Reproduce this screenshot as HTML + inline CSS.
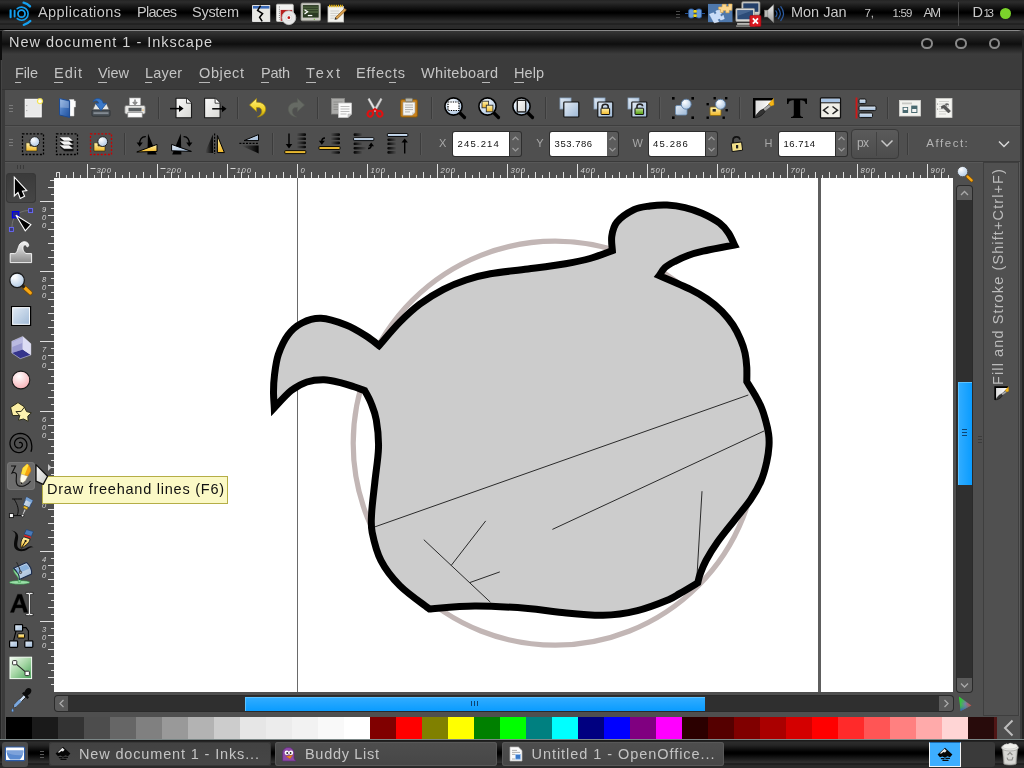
<!DOCTYPE html>
<html><head><meta charset="utf-8"><title>Inkscape</title>
<style>
html,body{margin:0;padding:0;background:#4e4e4e;}
body{width:1024px;height:768px;position:relative;overflow:hidden;font-family:"Liberation Sans",sans-serif;}
#wrap{position:absolute;left:0;top:0;width:1024px;height:768px;will-change:transform;}
.t{position:absolute;white-space:nowrap;font-family:"Liberation Sans",sans-serif;}
svg text{font-family:"Liberation Sans",sans-serif;}
</style></head><body>
<svg width="0" height="0" style="position:absolute"><defs>
<linearGradient id="gPage" x1="0" y1="0" x2="1" y2="1"><stop offset="0" stop-color="#fafafa"/><stop offset="1" stop-color="#d8d8d4"/></linearGradient>
<linearGradient id="gBlue" x1="0" y1="0" x2="1" y2="1"><stop offset="0" stop-color="#e4ecf5"/><stop offset="1" stop-color="#9db8d6"/></linearGradient>
<linearGradient id="gBlueV" x1="0" y1="0" x2="0" y2="1"><stop offset="0" stop-color="#dfe9f4"/><stop offset="1" stop-color="#9db8d6"/></linearGradient>
<linearGradient id="gBook" x1="0" y1="0" x2="1" y2="1"><stop offset="0" stop-color="#7fa6dc"/><stop offset=".5" stop-color="#4475bd"/><stop offset="1" stop-color="#1f4f9c"/></linearGradient>
<linearGradient id="gYel" x1="0" y1="0" x2="0" y2="1"><stop offset="0" stop-color="#fff3b0"/><stop offset="1" stop-color="#f2b827"/></linearGradient>
<linearGradient id="gGrn" x1="0" y1="0" x2="0" y2="1"><stop offset="0" stop-color="#c8e6a0"/><stop offset="1" stop-color="#4e9a06"/></linearGradient>
<linearGradient id="gBlkH" x1="0" y1="0" x2="1" y2="0"><stop offset="0" stop-color="#555"/><stop offset="1" stop-color="#000"/></linearGradient>
<linearGradient id="gBlkV" x1="0" y1="0" x2="0" y2="1"><stop offset="0" stop-color="#555"/><stop offset="1" stop-color="#000"/></linearGradient>
<linearGradient id="gFadeL" x1="0" y1="0" x2="1" y2="0"><stop offset="0" stop-color="#000" stop-opacity="0"/><stop offset="1" stop-color="#000"/></linearGradient>
<linearGradient id="gFadeR" x1="0" y1="0" x2="1" y2="0"><stop offset="0" stop-color="#000"/><stop offset="1" stop-color="#000" stop-opacity="0"/></linearGradient>
<radialGradient id="gLens" cx=".35" cy=".3" r=".8"><stop offset="0" stop-color="#fff"/><stop offset="1" stop-color="#a9c4e2"/></radialGradient>
<radialGradient id="gGlow" cx=".5" cy=".5" r=".5"><stop offset="0" stop-color="#fff"/><stop offset=".4" stop-color="#fffbe0"/><stop offset=".7" stop-color="#f3e24a"/><stop offset="1" stop-color="#f3e24a" stop-opacity="0"/></radialGradient>
<radialGradient id="gPink" cx=".4" cy=".3" r=".8"><stop offset="0" stop-color="#fff"/><stop offset="1" stop-color="#f7a8ae"/></radialGradient>
<linearGradient id="gGreenSq" x1="0" y1="0" x2="1" y2="1"><stop offset="0" stop-color="#f6fcf4"/><stop offset=".5" stop-color="#a4d6a4"/><stop offset="1" stop-color="#46a058"/></linearGradient>
<linearGradient id="gUndo" x1="0" y1="0" x2="0" y2="1"><stop offset="0" stop-color="#fff080"/><stop offset=".6" stop-color="#f0d020"/><stop offset="1" stop-color="#b89a10"/></linearGradient>
<linearGradient id="gTweak" x1="0" y1="0" x2="0" y2="1"><stop offset="0" stop-color="#f4f4f4"/><stop offset="1" stop-color="#8a8a8a"/></linearGradient>
<linearGradient id="gMetal" x1="0" y1="0" x2="0" y2="1"><stop offset="0" stop-color="#f0f0f0"/><stop offset="1" stop-color="#9a9a9a"/></linearGradient>
</defs></svg>
<div id="wrap">
<div style="position:absolute;left:0px;top:0px;width:1024px;height:30px;background:linear-gradient(#222 0,#2b2b2b 1px,#2a2a2a 2.5px,#000 12px,#000 13px,#2c2c2c 21.5px,#2c2c2c 23px,#222 23.5px,#222 24.5px,#2c2c2c 25px,#2a2a2a 28.5px,#000 29px,#000 30px)"></div>
<svg style="position:absolute;left:6px;top:-1px;overflow:visible" width="28" height="28" viewBox="0 0 24 24"><g transform="scale(0.85714)"><circle cx="15.5" cy="14.7" r="3.5" fill="none" stroke="#14a0f0" stroke-width="1.8"/>
<path d="M11.2,9.7 A6.6,6.6 0 1 1 11.2,19.7" fill="none" stroke="#14a0f0" stroke-width="1.6" stroke-linecap="round"/>
<path d="M8.6,11.8 V17.6" fill="none" stroke="#14a0f0" stroke-width="1.9" stroke-linecap="round"/>
<path d="M4.6,11.4 V18.2" fill="none" stroke="#14a0f0" stroke-width="2.1" stroke-linecap="round"/>
<path d="M17.6,3.7 C20,4.2 22.4,5.6 24,7.4" fill="none" stroke="#14a0f0" stroke-width="2.4" stroke-linecap="round"/>
<path d="M17.8,25.8 C20.4,25.2 22.6,23.8 24.3,22" fill="none" stroke="#14a0f0" stroke-width="2.4" stroke-linecap="round"/></g></svg>
<span class="t" style="left:38.0px;top:3.1px;font-size:14.5px;line-height:18.5px;color:#c8c8c8;letter-spacing:0.44px;">Applications</span>
<span class="t" style="left:137.0px;top:3.1px;font-size:14.5px;line-height:18.5px;color:#c8c8c8;letter-spacing:-0.70px;">Places</span>
<span class="t" style="left:192.0px;top:3.1px;font-size:14.5px;line-height:18.5px;color:#c8c8c8;letter-spacing:-0.27px;">System</span>
<svg style="position:absolute;left:251px;top:3px;overflow:visible" width="20" height="20" viewBox="0 0 24 24"><g transform="scale(1.20000)"><rect x="1.6" y="2.6" width="17.2" height="15.8" fill="#e8e8e4" stroke="#fafafa" stroke-width=".8"/>
<rect x="2" y="3" width="16.4" height="2.6" fill="#3a6ab8"/>
<path d="M9.6,2.6 L6.6,7.4 L11.6,10.6 L8.6,14.2 L11.2,18.4" fill="none" stroke="#000" stroke-width="1.5"/></g></svg>
<svg style="position:absolute;left:274.5px;top:3px;overflow:visible" width="21" height="21" viewBox="0 0 24 24"><g transform="scale(1.20000)"><rect x="1.4" y="1.2" width="16" height="16.4" rx="1" fill="#f2f2f0" stroke="#c8c8c4" stroke-width=".8"/>
<path d="M4.2,3.4 V16" stroke="#8a8a8a" stroke-width="1" stroke-dasharray="1,1"/>
<rect x="5.4" y="6.6" width="11" height="10.4" fill="#b82020"/>
<circle cx="13.2" cy="14" r="6.6" fill="#e8e8e8" stroke="#bdbdbd" stroke-width=".8"/>
<circle cx="13.2" cy="14" r="2.8" fill="#f8f8f8" stroke="#c8c8c8" stroke-width=".5"/><circle cx="13.2" cy="14" r="1.3" fill="#c01818"/></g></svg>
<svg style="position:absolute;left:299.75px;top:2.25px;overflow:visible" width="20.5" height="20.5" viewBox="0 0 24 24"><g transform="scale(1.20000)"><rect x="1" y="1" width="19" height="17.4" rx="1.4" fill="#c8c8c0" stroke="#8a8a84" stroke-width=".8"/>
<rect x="2.8" y="3" width="15.4" height="12.2" fill="#2a3a22"/>
<path d="M2.8,5 h15.4 M2.8,7.4 h15.4 M2.8,9.8 h15.4" stroke="#5a7048" stroke-width="1.4" opacity=".8"/>
<path d="M4.4,7.6 L7.4,9.6 L4.4,11.6" fill="none" stroke="#fff" stroke-width="1.2"/><path d="M7.6,13.2 h4.4" stroke="#fff" stroke-width="1.2"/>
<rect x="13.4" y="16.4" width="1.2" height="1" fill="#6ac030"/></g></svg>
<svg style="position:absolute;left:326px;top:3px;overflow:visible" width="20" height="20" viewBox="0 0 24 24"><g transform="scale(1.20000)"><rect x="2" y="3.6" width="15.6" height="15.4" fill="#f2f2ee" stroke="#c8c8c4" stroke-width=".8"/>
<path d="M4.4,8 h9 M4.4,10.4 h9 M4.4,12.8 h7 M4.4,15.2 h6" stroke="#c4c4c0" stroke-width=".8"/>
<path d="M3,3 h14" stroke="#e8b818" stroke-width="2.6" stroke-dasharray="1.4,.8"/>
<path d="M9.4,14.6 L18.8,5.4 L20.4,7 L11,16.2Z" fill="#d8a050" stroke="#8a5a1a" stroke-width=".7"/><path d="M8.6,16.8 L9.4,14.6 L11,16.2Z" fill="#222"/></g></svg>
<svg style="position:absolute;left:684.5px;top:3px;overflow:visible" width="20" height="20" viewBox="0 0 24 24"><g transform="scale(1.20000)"><path d="M0,10.5 H20" stroke="#2a5aa0" stroke-width=".9"/>
<rect x="3.6" y="6" width="5.4" height="9" rx="2" fill="#6a9ad8" stroke="#2a5a9c" stroke-width=".9"/>
<rect x="11.2" y="6" width="5.4" height="9" rx="2" fill="#6a9ad8" stroke="#2a5a9c" stroke-width=".9"/>
<rect x="8.4" y="7" width="3.4" height="2.8" rx=".8" fill="#f0d818"/><rect x="8.4" y="11.2" width="3.4" height="2.8" rx=".8" fill="#f0d818"/></g></svg>
<svg style="position:absolute;left:707.75px;top:1.15px;overflow:visible" width="24.5" height="24.5" viewBox="0 0 24 24"><g transform="scale(1.09091)"><rect x="0" y="2.6" width="22" height="16.4" fill="#4e78ac"/>
<path d="M1.4,12 L5,10.6 L6,12.4 L8,10.8 L7,9 L10.4,8 L12,11.4 L10.4,12.4 L12.4,14.4 L13.6,12.8 L14.6,16 L11.4,17 L10.8,15.4 L8.4,16.6 L9.6,18.6 L5.6,19.6Z" fill="#c8dcf8" stroke="#e8f0ff" stroke-width=".5"/>
<path d="M9.6,5.4 L12.6,5.4 L12.8,3 L16.4,3 L16.4,5 L18.4,5 L18.6,2.6 L21.6,2.8 L21.4,8.4 L19,8.4 L19,10.6 L16,10.6 L16,8.6 L13.8,8.6 L13.6,10.4 L11,10.2 L11.2,7.6 L9.6,7.4Z" fill="#fcd890" stroke="#e8a83a" stroke-width=".5"/></g></svg>
<svg style="position:absolute;left:734.75px;top:1.05px;overflow:visible" width="25.5" height="25.5" viewBox="0 0 24 24"><g transform="scale(1.00000)"><rect x="6.4" y=".8" width="17" height="11.6" rx="1" fill="#d0d0cc" stroke="#9a9a96" stroke-width=".7"/><rect x="7.8" y="2.2" width="14.2" height="8" fill="#24406a"/>
<rect x="18" y="12.4" width="5" height="2" fill="#c0c0bc"/>
<rect x=".8" y="7" width="17.6" height="12.4" rx="1" fill="#d8d8d4" stroke="#9a9a96" stroke-width=".7"/><rect x="2.2" y="8.6" width="14.8" height="8.6" fill="#2c4c78"/>
<path d="M2.2,8.6 h14.8 L2.2,14Z" fill="#5a7aa4" opacity=".6"/>
<rect x="2" y="20.8" width="15" height="1.6" fill="#c8c8c4"/><rect x="1" y="23" width="18" height="1.2" fill="#9a9a96"/>
<rect x="14" y="13.6" width="10.4" height="10.4" rx="1" fill="#d81820" stroke="#a00810" stroke-width=".6"/>
<path d="M16.8,16.4 L21.6,21.2 M21.6,16.4 L16.8,21.2" stroke="#fff" stroke-width="1.7"/></g></svg>
<svg style="position:absolute;left:764.05px;top:3.35px;overflow:visible" width="20.5" height="20.5" viewBox="0 0 24 24"><g transform="scale(1.20000)"><rect x=".6" y="7" width="3.4" height="6.6" fill="#b8b8b4" stroke="#8a8a86" stroke-width=".5"/>
<path d="M3.6,7 L9.4,1.6 V19 L3.6,13.6Z" fill="url(#gMetal)" stroke="#8a8a86" stroke-width=".6"/>
<path d="M11.6,7.6 C13,9.4 13,11.4 11.6,13.2 M14,5.6 C16.4,8.6 16.4,12.2 14,15.2 M16.4,3.6 C19.8,8 19.8,12.8 16.4,17.2" fill="none" stroke="#2a5aa0" stroke-width="1.2" stroke-linecap="round"/></g></svg>
<div style="position:absolute;left:676px;top:11px;width:4px;height:1px;background:#484848"></div>
<div style="position:absolute;left:676px;top:14px;width:4px;height:1px;background:#484848"></div>
<div style="position:absolute;left:676px;top:17px;width:4px;height:1px;background:#484848"></div>
<span class="t" style="left:791.0px;top:3.1px;font-size:14.5px;line-height:18.5px;color:#c8c8c8;letter-spacing:-0.02px;">Mon&nbsp;Jan</span>
<span class="t" style="left:864.5px;top:5.8px;font-size:11.5px;line-height:15.5px;color:#c8c8c8;letter-spacing:-0.09px;">7,</span>
<span class="t" style="left:892.5px;top:5.8px;font-size:11.5px;line-height:15.5px;color:#c8c8c8;letter-spacing:-0.79px;">1:59</span>
<span class="t" style="left:923.5px;top:4.3px;font-size:13px;line-height:17px;color:#c8c8c8;letter-spacing:-2.00px;">AM</span>
<div style="position:absolute;left:958px;top:2px;width:1px;height:24px;background:#4a4a4a"></div>
<span class="t" style="left:972.5px;top:3.1px;font-size:14.5px;line-height:18.5px;color:#c8c8c8;letter-spacing:0.00px;">D</span>
<span class="t" style="left:983.5px;top:5.8px;font-size:11.5px;line-height:15.5px;color:#c8c8c8;letter-spacing:-2.29px;">13</span>
<div style="position:absolute;left:999.5px;top:7.8px;width:11.7px;height:11.7px;border-radius:6px;background:#7bd32b"></div>
<div style="position:absolute;left:0px;top:30px;width:1024px;height:738px;background:#3b3b3b"></div>
<div style="position:absolute;left:5px;top:90px;width:1015px;height:650px;background:#4f4f4f"></div>
<div style="position:absolute;left:0px;top:30px;width:1024px;height:29px;background:linear-gradient(#8a8a8a 0,#8a8a8a 1px,#363636 1px,#0e0e0e 14px,#3c3c3c 24px,#3b3b3b 29px);border-radius:6px 6px 0 0"></div>
<span class="t" style="left:9.0px;top:33.0px;font-size:14.5px;line-height:18.5px;color:#d4d4d4;letter-spacing:0.97px;">New&nbsp;document&nbsp;1&nbsp;-&nbsp;Inkscape</span>
<div style="position:absolute;left:921.4px;top:38px;width:7.2px;height:7.2px;border:2px solid #8a8a8a;border-radius:7px"></div>
<div style="position:absolute;left:955.4px;top:38px;width:7.2px;height:7.2px;border:2px solid #8a8a8a;border-radius:7px"></div>
<div style="position:absolute;left:989.1px;top:38px;width:7.2px;height:7.2px;border:2px solid #8a8a8a;border-radius:7px"></div>
<div style="position:absolute;left:2px;top:89px;width:1020px;height:1px;background:#333"></div>
<span class="t" style="left:15.0px;top:64.2px;font-size:14.5px;line-height:18.5px;color:#c4c4c4;letter-spacing:-0.12px;">File</span>
<span class="t" style="left:54.0px;top:64.2px;font-size:14.5px;line-height:18.5px;color:#c4c4c4;letter-spacing:1.00px;">Edit</span>
<span class="t" style="left:98.0px;top:64.2px;font-size:14.5px;line-height:18.5px;color:#c4c4c4;letter-spacing:-0.06px;">View</span>
<span class="t" style="left:145.0px;top:64.2px;font-size:14.5px;line-height:18.5px;color:#c4c4c4;letter-spacing:0.18px;">Layer</span>
<span class="t" style="left:199.0px;top:64.2px;font-size:14.5px;line-height:18.5px;color:#c4c4c4;letter-spacing:0.62px;">Object</span>
<span class="t" style="left:261.0px;top:64.2px;font-size:14.5px;line-height:18.5px;color:#c4c4c4;letter-spacing:-0.28px;">Path</span>
<span class="t" style="left:306.0px;top:64.2px;font-size:14.5px;line-height:18.5px;color:#c4c4c4;letter-spacing:2.47px;">Text</span>
<span class="t" style="left:356.0px;top:64.2px;font-size:14.5px;line-height:18.5px;color:#c4c4c4;letter-spacing:0.82px;">Effects</span>
<span class="t" style="left:421.0px;top:64.2px;font-size:14.5px;line-height:18.5px;color:#c4c4c4;letter-spacing:0.32px;">Whiteboard</span>
<span class="t" style="left:514.0px;top:64.2px;font-size:14.5px;line-height:18.5px;color:#c4c4c4;letter-spacing:0.06px;">Help</span>
<div style="position:absolute;left:15px;top:82px;width:6px;height:1px;background:#b8b8b8"></div>
<div style="position:absolute;left:54px;top:82px;width:9px;height:1px;background:#b8b8b8"></div>
<div style="position:absolute;left:98px;top:82px;width:9px;height:1px;background:#b8b8b8"></div>
<div style="position:absolute;left:145px;top:82px;width:7px;height:1px;background:#b8b8b8"></div>
<div style="position:absolute;left:199px;top:82px;width:11px;height:1px;background:#b8b8b8"></div>
<div style="position:absolute;left:261px;top:82px;width:8px;height:1px;background:#b8b8b8"></div>
<div style="position:absolute;left:306px;top:82px;width:10px;height:1px;background:#b8b8b8"></div>
<div style="position:absolute;left:389px;top:82px;width:7px;height:1px;background:#b8b8b8"></div>
<div style="position:absolute;left:482px;top:82px;width:8px;height:1px;background:#b8b8b8"></div>
<div style="position:absolute;left:514px;top:82px;width:10px;height:1px;background:#b8b8b8"></div>
<div style="position:absolute;left:5px;top:125px;width:1015px;height:1px;background:#3e3e3e"></div>
<div style="position:absolute;left:5px;top:126px;width:1015px;height:1px;background:#565656"></div>
<div style="position:absolute;left:5px;top:161px;width:1015px;height:1px;background:#3a3a3a"></div>
<div style="position:absolute;left:5px;top:162px;width:1015px;height:1px;background:#585858"></div>
<div style="position:absolute;left:9px;top:105px;width:4px;height:1px;background:#7a7a7a"></div>
<div style="position:absolute;left:9px;top:108px;width:4px;height:1px;background:#7a7a7a"></div>
<div style="position:absolute;left:9px;top:111px;width:4px;height:1px;background:#7a7a7a"></div>
<div style="position:absolute;left:9px;top:139px;width:4px;height:1px;background:#7a7a7a"></div>
<div style="position:absolute;left:9px;top:142px;width:4px;height:1px;background:#7a7a7a"></div>
<div style="position:absolute;left:9px;top:145px;width:4px;height:1px;background:#7a7a7a"></div>
<svg style="position:absolute;left:21px;top:96px;overflow:visible" width="24" height="24" viewBox="0 0 24 24"><rect x="4.2" y="3.3" width="16" height="17.6" fill="#e9e9e9" stroke="#fff" stroke-width="1"/>
<circle cx="5.8" cy="9.6" r=".6" fill="#9a9a9a"/><circle cx="5.8" cy="14.6" r=".6" fill="#9a9a9a"/>
<circle cx="19" cy="5.2" r="3.6" fill="url(#gGlow)"/></svg>
<svg style="position:absolute;left:55px;top:96px;overflow:visible" width="24" height="24" viewBox="0 0 24 24"><path d="M14.5,3.5 H19 V5 H20.5 V11 H19 V20 H14.5Z" fill="#fdfdfd" stroke="#d0d0d0" stroke-width=".5"/>
<path d="M4.5,2.6 L14.6,4.8 V21.4 L4.5,19Z" fill="url(#gBook)" stroke="#1d4b92" stroke-width="1" stroke-linejoin="round"/>
<path d="M5.2,3.6 L13.8,5.5 V12 L5.2,11.5Z" fill="#fff" opacity=".25"/></svg>
<svg style="position:absolute;left:89px;top:96px;overflow:visible" width="24" height="24" viewBox="0 0 24 24"><path d="M3.5,14 L6.5,7.5 H17.5 L20.5,14Z" fill="#e8e8e4" stroke="#555" stroke-width=".8"/>
<rect x="3" y="14" width="18" height="6.2" rx="1" fill="#4d545a" stroke="#2a2e32" stroke-width=".8"/>
<rect x="4.5" y="16.3" width="15" height="1.6" fill="#8a9299"/>
<path d="M4,6 C5,1.5 13,1 14.2,7.2 L17.6,7.2 L12,14.4 L6.4,7.2 L9.6,7.2 C9.2,4.5 6,4.2 4,6Z" fill="#3a78c8" stroke="#1c4f96" stroke-width=".8" stroke-linejoin="round"/></svg>
<svg style="position:absolute;left:123px;top:96px;overflow:visible" width="24" height="24" viewBox="0 0 24 24"><rect x="6.5" y="2" width="11" height="9" fill="#fafafa" stroke="#aaa" stroke-width=".6"/>
<path d="M12,3.5 V7.5 M9.8,6 L12,8.3 L14.2,6" stroke="#8a8a8a" stroke-width="1.6" fill="none"/>
<rect x="1.8" y="9.5" width="20.4" height="8.5" rx="1.5" fill="#e6e6e4" stroke="#777" stroke-width=".8"/>
<rect x="5.5" y="11.8" width="13" height="3.6" fill="#5a5e60"/>
<rect x="4.8" y="16.5" width="14.4" height="4.8" fill="#fcfcfc" stroke="#888" stroke-width=".7"/>
<rect x="19.5" y="13.5" width="1" height="1.2" fill="#f0a020"/></svg>
<div style="position:absolute;left:158px;top:97px;width:1px;height:22px;background:#3c3c3c"></div>
<div style="position:absolute;left:159px;top:97px;width:1px;height:22px;background:#575757"></div>
<svg style="position:absolute;left:168px;top:96px;overflow:visible" width="24" height="24" viewBox="0 0 24 24"><path d="M8,2.2 h10.5 l5,5 v14.6 h-15.5Z" fill="url(#gPage)" stroke="#1a1a1a" stroke-width="1.1" stroke-linejoin="round"/>
<path d="M18.5,2.2 v5 h5" fill="#fff" stroke="#1a1a1a" stroke-width=".8" stroke-linejoin="round"/>
<path d="M2,12.6 H12" stroke="#000" stroke-width="1.5"/><path d="M11,9.2 L15.6,12.6 L11,16Z" fill="#000"/></svg>
<svg style="position:absolute;left:202px;top:96px;overflow:visible" width="24" height="24" viewBox="0 0 24 24"><path d="M2.6,2.2 h10.5 l5,5 v14.6 h-15.5Z" fill="url(#gPage)" stroke="#1a1a1a" stroke-width="1.1" stroke-linejoin="round"/>
<path d="M13.1,2.2 v5 h5" fill="#fff" stroke="#1a1a1a" stroke-width=".8" stroke-linejoin="round"/>
<path d="M10.2,12.8 H21" stroke="#000" stroke-width="1.5"/><path d="M20,9.4 L24.6,12.8 L20,16.2Z" fill="#000"/></svg>
<div style="position:absolute;left:237px;top:97px;width:1px;height:22px;background:#3c3c3c"></div>
<div style="position:absolute;left:238px;top:97px;width:1px;height:22px;background:#575757"></div>
<svg style="position:absolute;left:247px;top:96px;overflow:visible" width="24" height="24" viewBox="0 0 24 24"><path d="M2.5,9 L9.5,2.5 V6.2 C16,6 19.5,10 18.5,14.5 C17.8,18.2 14.5,20.5 10.5,21 C14.5,19 15.5,15.5 14.2,13.2 C13.2,11.6 11.5,11.4 9.5,11.6 V15.5Z" fill="url(#gUndo)" stroke="#a88a08" stroke-width=".7" stroke-linejoin="round"/></svg>
<svg style="position:absolute;left:283px;top:96px;overflow:visible" width="24" height="24" viewBox="0 0 24 24"><path d="M21.5,9 L14.5,2.5 V6.2 C8,6 4.5,10 5.5,14.5 C6.2,18.2 9.5,20.5 13.5,21 C9.5,19 8.5,15.5 9.8,13.2 C10.8,11.6 12.5,11.4 14.5,11.6 V15.5Z" fill="#666a64" stroke="#5a5e58" stroke-width=".7" stroke-linejoin="round"/></svg>
<div style="position:absolute;left:317px;top:97px;width:1px;height:22px;background:#3c3c3c"></div>
<div style="position:absolute;left:318px;top:97px;width:1px;height:22px;background:#575757"></div>
<svg style="position:absolute;left:329px;top:96px;overflow:visible" width="24" height="24" viewBox="0 0 24 24"><rect x="2.5" y="2.5" width="13" height="15.5" fill="#aaaaa8" stroke="#8a8a88" stroke-width=".8"/>
<path d="M4.5,6 h9 M4.5,8.5 h9 M4.5,11 h9 M4.5,13.5 h5" stroke="#8c8c8a" stroke-width=".9"/>
<path d="M9.5,7 H22.5 V18 L19,21.5 H9.5Z" fill="#fafafa" stroke="#c8c8c8" stroke-width=".8"/>
<path d="M11.5,10.5 h9 M11.5,13 h9 M11.5,15.5 h9 M11.5,18 h6" stroke="#b4b4b4" stroke-width=".9"/>
<path d="M22.5,18 H19 V21.5Z" fill="#d0d0d0" stroke="#aaa" stroke-width=".5"/></svg>
<svg style="position:absolute;left:363px;top:96px;overflow:visible" width="24" height="24" viewBox="0 0 24 24"><path d="M6.2,2 L13.6,14.5 L11.6,15.5 L5,3.5Z" fill="#e8e8e8" stroke="#b8b8b8" stroke-width=".5"/>
<path d="M17.8,2 L10.4,14.5 L12.4,15.5 L19,3.5Z" fill="#dcdcdc" stroke="#b0b0b0" stroke-width=".5"/>
<ellipse cx="7.3" cy="17.8" rx="2.6" ry="2.9" transform="rotate(28 7.3 17.8)" fill="none" stroke="#e01010" stroke-width="2"/>
<ellipse cx="16.7" cy="17.8" rx="2.6" ry="2.9" transform="rotate(-28 16.7 17.8)" fill="none" stroke="#e01010" stroke-width="2"/>
<path d="M9.2,15 L12,13 L14.8,15" stroke="#e01010" stroke-width="2" fill="none"/></svg>
<svg style="position:absolute;left:397px;top:96px;overflow:visible" width="24" height="24" viewBox="0 0 24 24"><rect x="3.7" y="3.7" width="16.6" height="17.3" rx="1.3" fill="#c8821e" stroke="#8f5902" stroke-width=".9"/>
<path d="M6,6.2 H18 V16.5 L15,19.3 H6Z" fill="#f4f4f2" stroke="#a0a09c" stroke-width=".6"/>
<path d="M8,9 h8 M8,11.3 h8 M8,13.6 h8 M8,15.9 h5" stroke="#a8a8a4" stroke-width=".9"/>
<path d="M18,16.5 H15 V19.3Z" fill="#d0d0cc"/>
<rect x="8.5" y="2.2" width="7" height="3.6" rx="1" fill="#b4b4aa" stroke="#6e6e66" stroke-width=".7"/></svg>
<div style="position:absolute;left:431px;top:97px;width:1px;height:22px;background:#3c3c3c"></div>
<div style="position:absolute;left:432px;top:97px;width:1px;height:22px;background:#575757"></div>
<svg style="position:absolute;left:443px;top:96px;overflow:visible" width="24" height="24" viewBox="0 0 24 24"><path d="M16.5,16.5 L21.5,21.5" stroke="#000" stroke-width="3.2" stroke-linecap="round"/>
<circle cx="10.5" cy="10.5" r="8.6" fill="url(#gLens)" stroke="#000" stroke-width="1.6"/><rect x="5" y="6" width="11" height="8.5" fill="#fff" stroke="#000" stroke-width="1.2" stroke-dasharray="1.3,1.1"/></svg>
<svg style="position:absolute;left:477px;top:96px;overflow:visible" width="24" height="24" viewBox="0 0 24 24"><path d="M16.5,16.5 L21.5,21.5" stroke="#000" stroke-width="3.2" stroke-linecap="round"/>
<circle cx="10.5" cy="10.5" r="8.6" fill="url(#gLens)" stroke="#000" stroke-width="1.6"/><rect x="5" y="5.2" width="6.6" height="6.6" fill="url(#gYel)" stroke="#333" stroke-width=".9"/><rect x="9.3" y="9.2" width="6.6" height="6.6" fill="url(#gYel)" stroke="#333" stroke-width=".9"/></svg>
<svg style="position:absolute;left:511px;top:96px;overflow:visible" width="24" height="24" viewBox="0 0 24 24"><path d="M16.5,16.5 L21.5,21.5" stroke="#000" stroke-width="3.2" stroke-linecap="round"/>
<circle cx="10.5" cy="10.5" r="8.6" fill="url(#gLens)" stroke="#000" stroke-width="1.6"/><rect x="6.3" y="4.3" width="8.4" height="11.6" fill="url(#gPage)" stroke="#222" stroke-width="1.4"/></svg>
<div style="position:absolute;left:545px;top:97px;width:1px;height:22px;background:#3c3c3c"></div>
<div style="position:absolute;left:546px;top:97px;width:1px;height:22px;background:#575757"></div>
<svg style="position:absolute;left:557px;top:96px;overflow:visible" width="24" height="24" viewBox="0 0 24 24"><rect x="3" y="2" width="11" height="11" fill="url(#gBlue)" stroke="#8aa6c4" stroke-width=".8"/><rect x="6.8" y="6" width="15" height="15" rx=".8" fill="url(#gBlue)" stroke="#111" stroke-width="1.2"/></svg>
<svg style="position:absolute;left:591px;top:96px;overflow:visible" width="24" height="24" viewBox="0 0 24 24"><rect x="3" y="2" width="11" height="11" fill="url(#gBlue)" stroke="#8aa6c4" stroke-width=".8"/><rect x="6.8" y="6" width="15" height="15" rx=".8" fill="url(#gBlue)" stroke="#111" stroke-width="1.2"/>
<path d="M11.2,12.5 V10.6 C11.2,7.4 17.2,7.4 17.2,10.6 V12.5" fill="none" stroke="#222" stroke-width="1.6"/>
<rect x="10" y="12.2" width="8.6" height="6.3" rx=".6" fill="url(#gYel)" stroke="#111" stroke-width="1"/></svg>
<svg style="position:absolute;left:625px;top:96px;overflow:visible" width="24" height="24" viewBox="0 0 24 24"><rect x="3" y="2" width="11" height="11" fill="url(#gBlue)" stroke="#8aa6c4" stroke-width=".8"/><rect x="6.8" y="6" width="15" height="15" rx=".8" fill="url(#gBlue)" stroke="#111" stroke-width="1.2"/>
<path d="M12,12.5 V10.2 C12,7.4 17.6,7.4 17.6,10.2" fill="none" stroke="#222" stroke-width="1.6"/>
<rect x="10" y="12.2" width="8.6" height="6.3" rx=".6" fill="url(#gGrn)" stroke="#111" stroke-width="1"/></svg>
<div style="position:absolute;left:659px;top:97px;width:1px;height:22px;background:#3c3c3c"></div>
<div style="position:absolute;left:660px;top:97px;width:1px;height:22px;background:#575757"></div>
<svg style="position:absolute;left:671px;top:96px;overflow:visible" width="24" height="24" viewBox="0 0 24 24"><rect x="1" y="1" width="2.6" height="2.6" fill="#000"/><rect x="20.4" y="1" width="2.6" height="2.6" fill="#000"/><rect x="1" y="20.4" width="2.6" height="2.6" fill="#000"/><rect x="20.4" y="20.4" width="2.6" height="2.6" fill="#000"/><rect x="4.5" y="9.5" width="11.5" height="9.5" rx="1.5" fill="url(#gBlue)" stroke="#6a8db4" stroke-width=".8"/>
<circle cx="15.2" cy="8.2" r="5" fill="url(#gLens)" stroke="#5a7ca4" stroke-width=".9"/></svg>
<svg style="position:absolute;left:705px;top:96px;overflow:visible" width="24" height="24" viewBox="0 0 24 24"><rect x="1.5" y="7" width="2.4" height="2.4" fill="#000"/><rect x="8.5" y="1" width="2.4" height="2.4" fill="#000"/><rect x="20" y="1" width="2.4" height="2.4" fill="#000"/><rect x="20.5" y="13" width="2.4" height="2.4" fill="#000"/><rect x="1.5" y="20.5" width="2.4" height="2.4" fill="#000"/><rect x="17.5" y="20.5" width="2.4" height="2.4" fill="#000"/><rect x="5" y="11" width="11" height="8.5" rx="1" fill="url(#gYel)" stroke="#8a6a10" stroke-width=".8"/>
<rect x="7.6" y="13" width="3.2" height="2.6" fill="#222"/>
<circle cx="15.5" cy="8.3" r="5" fill="url(#gLens)" stroke="#5a7ca4" stroke-width=".9"/></svg>
<div style="position:absolute;left:739px;top:97px;width:1px;height:22px;background:#3c3c3c"></div>
<div style="position:absolute;left:740px;top:97px;width:1px;height:22px;background:#575757"></div>
<svg style="position:absolute;left:751px;top:96px;overflow:visible" width="24" height="24" viewBox="0 0 24 24"><path d="M2,2 H22 V4 L4,22 H2Z" fill="#000"/>
<path d="M4.5,4.5 H21.5 L4.5,21.5Z" fill="#fff"/>
<path d="M2,2 H22 L2,22Z" fill="url(#gFadeR)" opacity=".15"/>
<path d="M22.5,2.5 L23,9 L19,10.5 L17.5,8Z" fill="#f5b516" stroke="#c88a00" stroke-width=".4"/>
<path d="M18.2,8.3 L19.8,10.8 L13.5,15.5 L11.8,13.2Z" fill="#aaa" stroke="#444" stroke-width=".5"/>
<path d="M12.2,13 L14,15.6 C11,20 7,21.5 3.5,22 C5,19 8,14.5 12.2,13Z" fill="#333" stroke="#000" stroke-width=".5"/></svg>
<svg style="position:absolute;left:785px;top:96px;overflow:visible" width="24" height="24" viewBox="0 0 24 24"><path d="M2,2.5 H22 V8 H20.6 C20.2,5.2 18.8,4.2 15.2,4.2 V18.5 C15.2,20.3 16,20.8 18,21 V22 H6 V21 C8,20.8 8.8,20.3 8.8,18.5 V4.2 C5.2,4.2 3.8,5.2 3.4,8 H2Z" fill="#000"/></svg>
<svg style="position:absolute;left:818px;top:96px;overflow:visible" width="24" height="24" viewBox="0 0 24 24"><rect x="2.5" y="2" width="20" height="20" rx=".8" fill="#f0efe8" stroke="#111" stroke-width="1.3"/>
<rect x="3.2" y="2.7" width="18.6" height="3.6" fill="#a8c4e4"/>
<path d="M2.5,6.8 H22.5" stroke="#111" stroke-width="1"/>
<path d="M10.5,10.5 L5.5,14.2 L10.5,18 M14.5,10.5 L19.5,14.2 L14.5,18" fill="none" stroke="#222" stroke-width="1.5"/></svg>
<svg style="position:absolute;left:853px;top:96px;overflow:visible" width="24" height="24" viewBox="0 0 24 24"><rect x="2.6" y="1.5" width="1.8" height="21" fill="#d01818"/>
<rect x="6" y="3" width="7" height="4.6" rx="1.2" fill="url(#gBlueV)" stroke="#111" stroke-width="1"/>
<rect x="6" y="10" width="17" height="4.6" rx="1.2" fill="url(#gBlueV)" stroke="#111" stroke-width="1"/>
<rect x="6" y="17" width="13.5" height="4.6" rx="1.2" fill="url(#gBlueV)" stroke="#111" stroke-width="1"/></svg>
<div style="position:absolute;left:887px;top:97px;width:1px;height:22px;background:#3c3c3c"></div>
<div style="position:absolute;left:888px;top:97px;width:1px;height:22px;background:#575757"></div>
<svg style="position:absolute;left:898px;top:96px;overflow:visible" width="24" height="24" viewBox="0 0 24 24"><rect x="1.5" y="4.5" width="21" height="15.5" fill="#f2f2ee" stroke="#d8d8d4" stroke-width=".8"/>
<rect x="4" y="6.5" width="10" height="1.8" fill="#c8c8c4"/>
<rect x="4.6" y="11" width="5.5" height="6" fill="#4a6a70"/><rect x="5.6" y="11.8" width="3.6" height="2.2" fill="#f4f4f4"/>
<rect x="13.2" y="9.6" width="6.2" height="7.4" fill="#4a6a70"/><rect x="14.2" y="13" width="4.2" height="3" fill="#f4f4f4"/></svg>
<svg style="position:absolute;left:932px;top:96px;overflow:visible" width="24" height="24" viewBox="0 0 24 24"><rect x="4" y="2.5" width="16" height="19" fill="#f4f4f0" stroke="#d0d0cc" stroke-width=".8"/>
<path d="M7,5.5 h10 M7,8 h10 M7,10.5 h10 M7,13 h10 M7,15.5 h10 M7,18 h7" stroke="#c8c8c4" stroke-width=".8"/>
<circle cx="5.6" cy="8" r=".5" fill="#555"/><circle cx="5.6" cy="13" r=".5" fill="#555"/>
<path d="M9.5,10.2 L12.5,9 L18.5,15 L16.5,17 L11.5,12 L9.5,12.5Z" fill="#555" stroke="#333" stroke-width=".5"/>
<path d="M13,8 C15,6.5 17,7.5 17,9.5 L15,9 L14,10.5Z" fill="#666"/></svg>
<svg style="position:absolute;left:21px;top:132px;overflow:visible" width="24" height="24" viewBox="0 0 24 24"><rect x="1.5" y="1.9" width="21" height="20.6" fill="none" stroke="#000" stroke-width="1.3" stroke-dasharray="2,1.6"/>
<path d="M5,10.8 H9 V14 H16 V19 H5Z" fill="url(#gYel)" stroke="#2a2208" stroke-width=".6"/>
<circle cx="13.7" cy="9.6" r="4.9" fill="url(#gLens)" stroke="#222" stroke-width="1"/></svg>
<svg style="position:absolute;left:55px;top:132px;overflow:visible" width="24" height="24" viewBox="0 0 24 24"><rect x="1.5" y="1.9" width="21" height="20.6" fill="none" stroke="#000" stroke-width="1.3" stroke-dasharray="2,1.6"/>
<path d="M5,13.5 H14.5 L18.5,17 V19.2 H9.5 L5,15.2Z" fill="#111"/>
<path d="M5,9.5 H14.5 L18.5,13 V15.2 H9.5 L5,11.2Z" fill="#111"/>
<path d="M5,5.5 H14.5 L18.5,9 V11.2 H9.5 L5,7.2Z" fill="#111"/>
<path d="M4.6,13.2 H14 L18,16.8 H9Z" fill="#f4f4f4"/><path d="M4.6,9.2 H14 L18,12.8 H9Z" fill="#f4f4f4"/><path d="M4.6,5.2 H14 L18,8.8 H9Z" fill="#fff"/></svg>
<svg style="position:absolute;left:89px;top:132px;overflow:visible" width="24" height="24" viewBox="0 0 24 24"><rect x="1.5" y="1.9" width="21" height="20.6" fill="none" stroke="#cc0000" stroke-width="1.3" stroke-dasharray="2,1.6"/>
<path d="M5,10.8 H9 V14 H16 V19 H5Z" fill="url(#gYel)" stroke="#2a2208" stroke-width=".6"/>
<circle cx="13.7" cy="9.6" r="4.9" fill="url(#gLens)" stroke="#222" stroke-width="1"/></svg>
<div style="position:absolute;left:124px;top:133px;width:1px;height:22px;background:#3c3c3c"></div>
<div style="position:absolute;left:125px;top:133px;width:1px;height:22px;background:#575757"></div>
<svg style="position:absolute;left:135px;top:132px;overflow:visible" width="24" height="24" viewBox="0 0 24 24"><path d="M13,1.5 L21.7,22.4 H12.4Z" fill="#000"/>
<path d="M1.8,20 L22,12.4 V19.4Z" fill="url(#gYel)" stroke="#000" stroke-width="1" stroke-linejoin="miter"/>
<path d="M10.8,4.6 C6.5,4.4 4.6,7.5 4.6,12" fill="none" stroke="#000" stroke-width="1.3"/>
<path d="M1.6,10.6 H7.8 L4.7,14.8Z" fill="#000"/></svg>
<svg style="position:absolute;left:169px;top:132px;overflow:visible" width="24" height="24" viewBox="0 0 24 24"><path d="M11.8,1.5 L3.2,22.4 H12.4Z" fill="#000"/>
<path d="M22.4,19.4 L2.6,12.4 V18.8Z" fill="url(#gBlue)" stroke="#000" stroke-width="1" stroke-linejoin="miter"/>
<path d="M14.6,4.6 C18.6,4.4 20.4,7.5 20.4,12" fill="none" stroke="#000" stroke-width="1.3"/>
<path d="M17.2,10.6 H23.4 L20.3,14.8Z" fill="#000"/></svg>
<svg style="position:absolute;left:203px;top:132px;overflow:visible" width="24" height="24" viewBox="0 0 24 24"><path d="M9.8,2.4 L10.2,21 H1.8Z" fill="url(#gBlkH)"/>
<path d="M11.6,1.5 V22" stroke="#000" stroke-width="1.2" stroke-dasharray="2,1.3"/>
<path d="M14.4,3.5 L21.4,20.6 H14.4Z" fill="url(#gYel)" stroke="#000" stroke-width="1" stroke-linejoin="miter"/></svg>
<svg style="position:absolute;left:237px;top:132px;overflow:visible" width="24" height="24" viewBox="0 0 24 24"><path d="M21.5,2.6 V8.6 H7Z" fill="url(#gBlue)" stroke="#000" stroke-width="1" stroke-linejoin="miter"/>
<path d="M2.4,11.3 H22" stroke="#000" stroke-width="1.2" stroke-dasharray="2,1.3"/>
<path d="M3.6,13.4 H21.6 V21.4Z" fill="url(#gBlkH)"/></svg>
<div style="position:absolute;left:272px;top:133px;width:1px;height:22px;background:#3c3c3c"></div>
<div style="position:absolute;left:273px;top:133px;width:1px;height:22px;background:#575757"></div>
<svg style="position:absolute;left:283px;top:132px;overflow:visible" width="24" height="24" viewBox="0 0 24 24"><rect x="13.5" y="1.3" width="9.5" height="2.6" rx="1.2" fill="url(#gFadeL)"/><rect x="13.5" y="5.5" width="9.5" height="2.6" rx="1.2" fill="url(#gFadeL)"/><rect x="13.5" y="9.6" width="9.5" height="2.6" rx="1.2" fill="url(#gFadeL)"/><rect x="13.5" y="13.7" width="9.5" height="2.6" rx="1.2" fill="url(#gFadeL)"/><rect x="1.8" y="18.6" width="21" height="3" rx=".6" fill="#e8b830" stroke="#000" stroke-width=".9"/>
<path d="M6,1.5 V13" stroke="#000" stroke-width="1.4"/><path d="M2.7,12 H9.3 L6,16.4Z" fill="#000"/></svg>
<svg style="position:absolute;left:317px;top:132px;overflow:visible" width="24" height="24" viewBox="0 0 24 24"><rect x="13.5" y="1.3" width="9.5" height="2.6" rx="1.2" fill="url(#gFadeL)"/><rect x="13.5" y="5.5" width="9.5" height="2.6" rx="1.2" fill="url(#gFadeL)"/><rect x="13.5" y="9.6" width="9.5" height="2.6" rx="1.2" fill="url(#gFadeL)"/><rect x="13.5" y="19.2" width="9.5" height="2.6" rx="1.2" fill="url(#gFadeL)"/><rect x="2" y="14.5" width="21" height="3" rx=".6" fill="#e8b830" stroke="#000" stroke-width=".9"/>
<path d="M8,6 C5.5,6 4.8,7.5 4.8,9.5" fill="none" stroke="#000" stroke-width="1.4"/><path d="M1.8,8.8 H7.8 L4.8,12.8Z" fill="#000"/></svg>
<svg style="position:absolute;left:351px;top:132px;overflow:visible" width="24" height="24" viewBox="0 0 24 24"><rect x="2.6" y="1.3" width="8.9" height="2.6" rx="1.2" fill="url(#gFadeR)"/><rect x="2.6" y="10.5" width="8.9" height="2.6" rx="1.2" fill="url(#gFadeR)"/><rect x="2.6" y="19.1" width="8.9" height="2.6" rx="1.2" fill="url(#gFadeR)"/><rect x="2.6" y="14.9" width="12.9" height="2.6" rx="1.2" fill="url(#gFadeR)"/><rect x="2.6" y="5.6" width="20.2" height="3" rx=".6" fill="url(#gBlueV)" stroke="#000" stroke-width=".9"/>
<path d="M17,16.5 C19.5,16.5 20.2,15.5 20.2,13.5" fill="none" stroke="#000" stroke-width="1.4"/><path d="M17.4,14.2 H23 L20.2,10.6Z" fill="#000"/></svg>
<svg style="position:absolute;left:385px;top:132px;overflow:visible" width="24" height="24" viewBox="0 0 24 24"><rect x="2.4" y="6.4" width="9.1" height="2.6" rx="1.2" fill="url(#gFadeR)"/><rect x="2.4" y="10.5" width="9.1" height="2.6" rx="1.2" fill="url(#gFadeR)"/><rect x="2.4" y="14.9" width="9.1" height="2.6" rx="1.2" fill="url(#gFadeR)"/><rect x="2.4" y="19.1" width="9.1" height="2.6" rx="1.2" fill="url(#gFadeR)"/><rect x="2.4" y="1.5" width="20.4" height="3" rx=".6" fill="url(#gBlueV)" stroke="#000" stroke-width=".9"/>
<path d="M19.7,21.5 V9" stroke="#000" stroke-width="1.4"/><path d="M16.5,10.6 H22.9 L19.7,6.4Z" fill="#000"/></svg>
<div style="position:absolute;left:420px;top:133px;width:1px;height:22px;background:#3c3c3c"></div>
<div style="position:absolute;left:421px;top:133px;width:1px;height:22px;background:#575757"></div>
<span class="t" style="left:439.0px;top:136.0px;font-size:11px;line-height:15px;color:#a8a8a8;letter-spacing:0.00px;">X</span><div style="position:absolute;left:451.5px;top:131px;width:70px;height:26px;border-radius:3px;background:#2e2e2e"></div><div style="position:absolute;left:452.5px;top:132px;width:56.5px;height:24px;background:#fff;border-radius:2px 0 0 2px"></div><div style="position:absolute;left:509.5px;top:132px;width:11px;height:24px;background:#5c5c5c;border-radius:0 2px 2px 0"></div><svg style="position:absolute;left:509.5px;top:132px" width="11" height="24"><path d="M2.5,8 L5.5,5 L8.5,8 M2.5,16 L5.5,19 L8.5,16" fill="none" stroke="#9a9a9a" stroke-width="1.2"/></svg><span class="t" style="left:457.5px;top:136.8px;font-size:9.5px;line-height:13.5px;color:#111;letter-spacing:1.16px;">245.214</span>
<span class="t" style="left:536.2px;top:136.0px;font-size:11px;line-height:15px;color:#a8a8a8;letter-spacing:0.00px;">Y</span><div style="position:absolute;left:549px;top:131px;width:70px;height:26px;border-radius:3px;background:#2e2e2e"></div><div style="position:absolute;left:550px;top:132px;width:56.5px;height:24px;background:#fff;border-radius:2px 0 0 2px"></div><div style="position:absolute;left:607px;top:132px;width:11px;height:24px;background:#5c5c5c;border-radius:0 2px 2px 0"></div><svg style="position:absolute;left:607px;top:132px" width="11" height="24"><path d="M2.5,8 L5.5,5 L8.5,8 M2.5,16 L5.5,19 L8.5,16" fill="none" stroke="#9a9a9a" stroke-width="1.2"/></svg><span class="t" style="left:554.6px;top:136.8px;font-size:9.5px;line-height:13.5px;color:#111;letter-spacing:0.53px;">353.786</span>
<span class="t" style="left:632.5px;top:136.0px;font-size:11px;line-height:15px;color:#a8a8a8;letter-spacing:0.00px;">W</span><div style="position:absolute;left:647.5px;top:131px;width:70px;height:26px;border-radius:3px;background:#2e2e2e"></div><div style="position:absolute;left:648.5px;top:132px;width:56.5px;height:24px;background:#fff;border-radius:2px 0 0 2px"></div><div style="position:absolute;left:705.5px;top:132px;width:11px;height:24px;background:#5c5c5c;border-radius:0 2px 2px 0"></div><svg style="position:absolute;left:705.5px;top:132px" width="11" height="24"><path d="M2.5,8 L5.5,5 L8.5,8 M2.5,16 L5.5,19 L8.5,16" fill="none" stroke="#9a9a9a" stroke-width="1.2"/></svg><span class="t" style="left:653.0px;top:136.8px;font-size:9.5px;line-height:13.5px;color:#111;letter-spacing:1.15px;">45.286</span>
<span class="t" style="left:764.5px;top:136.0px;font-size:11px;line-height:15px;color:#a8a8a8;letter-spacing:0.00px;">H</span><div style="position:absolute;left:777.5px;top:131px;width:70px;height:26px;border-radius:3px;background:#2e2e2e"></div><div style="position:absolute;left:778.5px;top:132px;width:56.5px;height:24px;background:#fff;border-radius:2px 0 0 2px"></div><div style="position:absolute;left:835.5px;top:132px;width:11px;height:24px;background:#5c5c5c;border-radius:0 2px 2px 0"></div><svg style="position:absolute;left:835.5px;top:132px" width="11" height="24"><path d="M2.5,8 L5.5,5 L8.5,8 M2.5,16 L5.5,19 L8.5,16" fill="none" stroke="#9a9a9a" stroke-width="1.2"/></svg><span class="t" style="left:783.5px;top:136.8px;font-size:9.5px;line-height:13.5px;color:#111;letter-spacing:0.49px;">16.714</span>
<svg style="position:absolute;left:724px;top:132px;overflow:visible" width="24" height="24" viewBox="0 0 24 24"><path d="M9,11 V8 C9,4.2 15.2,3.6 16,7.6" fill="none" stroke="#111" stroke-width="1.6"/>
<path d="M7.2,11.2 L17.6,10 L18.6,18.2 L8.2,19.6Z" fill="#f3e08a" stroke="#111" stroke-width="1"/>
<rect x="12" y="13" width="2.2" height="3.4" fill="#222"/></svg>
<div style="position:absolute;left:851px;top:129px;width:48px;height:30px;border:1px solid #3a3a3a;border-radius:4px;background:linear-gradient(#5a5a5a,#4c4c4c);box-sizing:border-box"></div>
<div style="position:absolute;left:876px;top:132px;width:1px;height:24px;background:#424242"></div>
<span class="t" style="left:857.0px;top:135.0px;font-size:12px;line-height:16px;color:#b0b0b0;letter-spacing:-0.67px;">px</span>
<svg style="position:absolute;left:879px;top:136px" width="16" height="14"><path d="M2.5,4.5 L8,10 L13.5,4.5" fill="none" stroke="#c8c8c8" stroke-width="1.5"/></svg>
<div style="position:absolute;left:907px;top:133px;width:1px;height:22px;background:#3c3c3c"></div>
<div style="position:absolute;left:908px;top:133px;width:1px;height:22px;background:#575757"></div>
<span class="t" style="left:926.3px;top:135.8px;font-size:11.5px;line-height:15.5px;color:#b4b4b4;letter-spacing:1.52px;">Affect:</span>
<svg style="position:absolute;left:996px;top:137px" width="16" height="14"><path d="M3,4.5 L8,9.5 L13,4.5" fill="none" stroke="#d8d8d8" stroke-width="1.5"/></svg>
<div style="position:absolute;left:17px;top:165px;width:1px;height:4px;background:#3a3a3a"></div>
<div style="position:absolute;left:20px;top:165px;width:1px;height:4px;background:#3a3a3a"></div>
<div style="position:absolute;left:23px;top:165px;width:1px;height:4px;background:#3a3a3a"></div>
<div style="position:absolute;left:6px;top:173px;width:30px;height:30px;border-radius:4px;background:linear-gradient(#3a3a3a,#464646);box-shadow:inset 0 0 0 1px #383838"></div>
<div style="position:absolute;left:7px;top:462px;width:28px;height:28px;border-radius:4px;background:#6c6c6c;box-shadow:inset 0 0 0 1px #767676"></div>
<svg style="position:absolute;left:7px;top:174px;overflow:visible" width="28" height="28" viewBox="0 0 24 24"><g transform="scale(0.85714)"><path d="M7.3,3.2 V22 L11,18.5 L13.25,24.4 L17.6,22.25 L15.4,17.25 L19.8,16.6Z" fill="#000" stroke="#fff" stroke-width="1.1" stroke-linejoin="miter"/></g></svg>
<svg style="position:absolute;left:7px;top:206px;overflow:visible" width="28" height="28" viewBox="0 0 24 24"><g transform="scale(0.85714)"><path d="M5,21 C5,12 10,5 21.5,4.5" fill="none" stroke="#7a7a7a" stroke-width=".8"/>
<rect x="5.4" y="5.6" width="6.4" height="6.2" fill="#26268a" stroke="#0000ee" stroke-width="1.2"/>
<rect x="21.6" y="2.6" width="4" height="4" fill="#3a3a78" stroke="#6a6aff" stroke-width=".9"/>
<rect x="2.4" y="21.4" width="4" height="4" fill="#3a3a78" stroke="#6a6aff" stroke-width=".9"/>
<path d="M8.9,9.25 L23.9,18.6 L18.25,24.9Z" fill="#000" stroke="#fff" stroke-width="1.1" stroke-linejoin="miter"/></g></svg>
<svg style="position:absolute;left:7px;top:238px;overflow:visible" width="28" height="28" viewBox="0 0 24 24"><g transform="scale(0.85714)"><path d="M3.2,15.6 H7.5 C10.5,15.2 10.8,10 12.2,7.2 C14.2,3 20.2,2.4 21.6,6.6 C22,8 21,9.3 19.8,8.6 C19.8,6.2 16.6,6.4 16,8.8 C15.4,12 17.4,15.4 20,15.6 H24.6 V24.6 H3.2Z" fill="url(#gTweak)" stroke="#fff" stroke-width=".9" stroke-linejoin="round"/></g></svg>
<svg style="position:absolute;left:7px;top:270px;overflow:visible" width="28" height="28" viewBox="0 0 24 24"><g transform="scale(0.85714)"><path d="M16.4,16.6 L23.4,23" stroke="#7a4a00" stroke-width="4.6" stroke-linecap="round"/>
<path d="M17.4,17.5 L23.3,22.9" stroke="#f5a614" stroke-width="3.2" stroke-linecap="round"/>
<path d="M15,15 L17.6,17.6" stroke="#222" stroke-width="3"/>
<circle cx="10.1" cy="10.3" r="7.3" fill="url(#gLens)" stroke="#1a1a1a" stroke-width="1.3"/>
<path d="M5,9.5 C5.5,6.5 8,5 10.5,5" fill="none" stroke="#fff" stroke-width="1.2" opacity=".8"/></g></svg>
<svg style="position:absolute;left:7px;top:302px;overflow:visible" width="28" height="28" viewBox="0 0 24 24"><g transform="scale(0.85714)"><rect x="4.6" y="4.6" width="19" height="18.8" fill="url(#gBlue)" stroke="#000" stroke-width="1.2"/>
<rect x="5.7" y="5.7" width="16.8" height="16.6" fill="none" stroke="#fff" stroke-width=".9"/></g></svg>
<svg style="position:absolute;left:7px;top:334px;overflow:visible" width="28" height="28" viewBox="0 0 24 24"><g transform="scale(0.85714)"><path d="M15.75,2.4 L4.8,7.3 V19 L13.3,24.7 L23.9,21 V9.7Z" fill="#e6e6f6" stroke="#3a3a3a" stroke-width=".9" stroke-linejoin="round"/>
<path d="M4.8,7.3 L15.75,2.4 V15.4 L4.8,19Z" fill="#9a9ad0"/>
<path d="M5.2,8 L15.3,3.4 V9 L5.2,13Z" fill="#c8c8e8" opacity=".7"/>
<path d="M15.75,15.4 L23.9,21 L13.3,24.7 L4.8,19Z" fill="#34348c"/>
<path d="M15.75,2.4 L23.9,9.7 V21 L15.75,15.4Z" fill="#dcdcf4"/>
<path d="M15.75,2.4 L4.8,7.3 V19 L13.3,24.7 L23.9,21 V9.7Z" fill="none" stroke="#e8e8f4" stroke-width=".7" stroke-linejoin="round" opacity=".7"/></g></svg>
<svg style="position:absolute;left:7px;top:366px;overflow:visible" width="28" height="28" viewBox="0 0 24 24"><g transform="scale(0.85714)"><circle cx="13.9" cy="14" r="8.9" fill="url(#gPink)" stroke="#1a1a1a" stroke-width="1.1"/></g></svg>
<svg style="position:absolute;left:7px;top:398px;overflow:visible" width="28" height="28" viewBox="0 0 24 24"><g transform="scale(0.85714)"><path d="M11,4.6 L17.6,9 L15.4,17.4 L5.6,17.6 L3.6,9.4Z" fill="#fbeea4" stroke="#2a2a1a" stroke-width="1" stroke-linejoin="round"/>
<path d="M17.4,9.2 L19.6,13.6 L24.4,14.8 L20.8,18.2 L21.2,23.4 L16.6,21 L11.4,22.2 L12.8,17.6 L9,13.6 L14.2,13.4Z" fill="#fdf3b0" stroke="#2a2a1a" stroke-width="1" stroke-linejoin="round"/></g></svg>
<svg style="position:absolute;left:7px;top:430px;overflow:visible" width="28" height="28" viewBox="0 0 24 24"><g transform="scale(0.85714)"><path d="M12.16,12.88L12.40,12.67L12.71,12.50L13.08,12.41L13.50,12.42L13.92,12.52L14.35,12.74L14.73,13.06L15.05,13.49L15.27,14.01L15.38,14.59L15.36,15.22L15.20,15.85L14.88,16.47L14.42,17.02L13.83,17.48L13.12,17.81L12.33,17.99L11.48,18.00L10.62,17.82L9.80,17.44L9.04,16.88L8.40,16.15L7.92,15.27L7.63,14.27L7.55,13.21L7.70,12.12L8.09,11.06L8.72,10.08L9.56,9.23L10.58,8.56L11.76,8.11L13.03,7.91L14.35,7.99L15.66,8.35L16.88,9.00L17.97,9.90L18.86,11.05L19.51,12.38L19.87,13.85L19.91,15.39L19.63,16.94L19.01,18.43L18.08,19.77L16.86,20.92L15.40,21.80L13.76,22.37L12.01,22.58L10.21,22.42L8.46,21.88L6.84,20.96L5.42,19.71L4.27,18.16L3.46,16.38L3.03,14.43L3.02,12.41L3.44,10.40L4.28,8.49L5.52,6.77L7.12,5.33L9.01,4.24L11.12,3.56L13.35,3.33L15.62,3.57L17.81,4.29L19.84,5.47L21.59,7.07L23.00,9.03L23.97,11.26L24.47,13.69L24.84,16.26L24.71,18.99L23.95,21.76" fill="none" stroke="#000" stroke-width="1.25" stroke-linejoin="round"/></g></svg>
<svg style="position:absolute;left:7px;top:462px;overflow:visible" width="28" height="28" viewBox="0 0 24 24"><g transform="scale(0.85714)"><path d="M4,4 H8.5 L5,11 C7,10 9.5,10.5 9.5,13 C9.5,17 8,21 11,23.5 C14.5,25.5 21,23.5 23.5,19" fill="none" stroke="#111" stroke-width="1.1"/>
<path d="M15.75,5.9 L20.1,2.1 C22.5,3.3 24,6.4 23.9,9 L20.75,14.2 L14.25,12.1Z" fill="#f7a410" stroke="#c47800" stroke-width=".5"/>
<path d="M15.75,5.9 L20.1,2.1 L21.6,3 L17.6,13.1 L14.25,12.1Z" fill="#ffe240"/>
<path d="M14.25,12.1 L20.75,14.2 L18.4,18.6 L13.9,22.4 L13.2,17Z" fill="#fdfbea" stroke="#b8a880" stroke-width=".4"/>
<path d="M13.5,20 L13.9,22.6 L15.9,21Z" fill="#111"/></g></svg>
<svg style="position:absolute;left:7px;top:494px;overflow:visible" width="28" height="28" viewBox="0 0 24 24"><g transform="scale(0.85714)"><path d="M5,5 C9,5 13,5 15,5 M7,5 C11,11 12.5,17 10,21.5" fill="none" stroke="#111" stroke-width="1"/>
<rect x="2.4" y="19.6" width="4" height="4" fill="#fff" stroke="#111" stroke-width=".9"/>
<path d="M6.4,21.6 H15" stroke="#111" stroke-width="1"/><circle cx="15.6" cy="21.6" r="1.3" fill="#fff" stroke="#111" stroke-width=".8"/>
<path d="M19.6,3 L25.6,6.6 L22.4,13.8 L16.2,11Z" fill="url(#gBlue)" stroke="#2a4a7a" stroke-width=".9"/>
<path d="M19.6,3 L25.6,6.6 L24.6,9 L18.4,5.8Z" fill="#7aa4d4"/>
<path d="M17,11.8 L21,13.4 L20,15.6 L16.6,14Z" fill="#f5c030" stroke="#8a6a00" stroke-width=".5"/>
<path d="M17.4,15 L19,15.8 L16.4,20.6 L15.4,20Z" fill="#ddd" stroke="#444" stroke-width=".5"/></g></svg>
<svg style="position:absolute;left:7px;top:526px;overflow:visible" width="28" height="28" viewBox="0 0 24 24"><g transform="scale(0.85714)"><path d="M4,4.5 C9,5 12,7.5 11,13 C10,18 9.5,21.5 13,23 C16,24 19,22.5 21,21 C23,19.8 25,20 26.5,21.4 C24,20.8 22.8,21.6 21,23 C17.5,25.6 12,26 9,23.6 C5.5,20.6 7.5,14 8.4,10 C9,7 7,5.4 4,4.5Z" fill="#0a0a0a"/>
<path d="M19.4,3.6 L26.4,5.6 L24.4,10.4 L17.2,8Z" fill="#4a7ab8" stroke="#1a3a6a" stroke-width=".6"/>
<path d="M17.4,8.8 L24,10.8 L23.4,12.4 L16.8,10.2Z" fill="#e02020"/>
<path d="M16.6,10.8 L23,12.8 C23,16.4 19,19.6 14.2,22.4 C13,18 14,13.6 16.6,10.8Z" fill="url(#gYel)" stroke="#1a1a1a" stroke-width=".9"/>
<path d="M14.6,21.6 L18.4,15.4" stroke="#111" stroke-width="1"/><circle cx="18.6" cy="15" r="1.1" fill="#111"/></g></svg>
<svg style="position:absolute;left:7px;top:558px;overflow:visible" width="28" height="28" viewBox="0 0 24 24"><g transform="scale(0.85714)"><ellipse cx="12.6" cy="24.4" rx="10.2" ry="1.9" fill="#9adfa8" stroke="#2a7a3a" stroke-width=".6"/>
<path d="M6.4,10.4 C6,15 10,17 11.4,20.5 L11.2,24.4 L13.6,24.4 L13.6,19.5 C11.5,15.6 8,13.4 6.4,10.4Z" fill="#8ad89a" stroke="#3a9a4a" stroke-width=".5"/>
<path d="M6.6,10.2 L19.6,4.6 C23,7.6 25,12.2 24.6,16 L12.4,21.6 C12.6,17.4 10.2,13 6.6,10.2Z" fill="url(#gBlue)" stroke="#1a2a4a" stroke-width="1.1" stroke-linejoin="round"/>
<path d="M8.6,10.6 L19.2,6.2 C20.6,7.4 21.6,8.8 22.4,10.4 L11,15.4Z" fill="#7aa8d8" opacity=".8"/>
<path d="M9.6,4.2 C11,7 12.6,10 13.4,14" fill="none" stroke="#222" stroke-width="1"/><circle cx="13.5" cy="14.4" r="1.2" fill="#aaa" stroke="#222" stroke-width=".7"/></g></svg>
<svg style="position:absolute;left:7px;top:590px;overflow:visible" width="28" height="28" viewBox="0 0 24 24"><g transform="scale(0.85714)"><path d="M3.2,22.4 L10.6,4.2 H14.8 L21,22.4 H16.8 L15.4,18 H8.6 L7,22.4Z M9.8,14.8 H14.4 L12.4,8.4Z" fill="#000" fill-rule="evenodd" stroke="#222" stroke-width=".4"/>
<path d="M18.8,2.4 H21.6 L22.4,3 L23.2,2.4 H26 V4.4 H23.4 V23.6 H26 V25.6 H23.2 L22.4,25 L21.6,25.6 H18.8 V23.6 H21.4 V4.4 H18.8Z" fill="#fff" stroke="#111" stroke-width=".7"/></g></svg>
<svg style="position:absolute;left:7px;top:622px;overflow:visible" width="28" height="28" viewBox="0 0 24 24"><g transform="scale(0.85714)"><path d="M15.6,5.6 H19 L21.4,9 V18.6 M9,9 L6.6,18.6" fill="none" stroke="#000" stroke-width="1.1"/>
<rect x="7.6" y="2.6" width="8" height="6.4" rx=".8" fill="url(#gBlue)" stroke="#000" stroke-width="1.2"/>
<rect x="2.6" y="18.8" width="8" height="6.6" rx=".8" fill="url(#gBlue)" stroke="#000" stroke-width="1.2"/>
<rect x="17.8" y="18.8" width="8" height="6.6" rx=".8" fill="url(#gBlue)" stroke="#000" stroke-width="1.2"/>
<rect x="10.8" y="11.8" width="6.8" height="4.2" rx=".6" fill="url(#gYel)" stroke="#000" stroke-width="1"/></g></svg>
<svg style="position:absolute;left:7px;top:654px;overflow:visible" width="28" height="28" viewBox="0 0 24 24"><g transform="scale(0.85714)"><rect x="3" y="3.2" width="21.6" height="21.4" fill="url(#gGreenSq)" stroke="#f4fff4" stroke-width="1"/>
<path d="M7.8,8.8 L20.2,19.4" stroke="#222" stroke-width="1.1"/>
<rect x="5.6" y="6.6" width="4.2" height="4.2" rx=".8" fill="#fff" stroke="#333" stroke-width="1"/>
<rect x="18" y="17.2" width="4.4" height="4.4" rx=".8" fill="#fff" stroke="#333" stroke-width="1"/></g></svg>
<svg style="position:absolute;left:7px;top:685px;overflow:visible" width="28" height="28" viewBox="0 0 24 24"><g transform="scale(0.85714)"><path d="M17.2,9.4 L19.4,11.6 L9.4,21.6 L6.8,22.4 L7.4,19.6Z" fill="#cfe0f4" stroke="#1a1a1a" stroke-width=".8"/>
<path d="M12.4,14.2 L14.6,16.4 L9.4,21.6 L6.8,22.4 L7.4,19.6Z" fill="#7aa8e0"/>
<path d="M15,8.6 L20.4,14 L22,12.4 L20.6,10.6 C24,9 25.4,5.6 23.6,3.8 C21.8,2 18.6,3.6 17.4,7.2 L16.6,7Z" fill="#0a0a0a"/>
<path d="M5.6,23.4 C4.4,25 4.4,26.6 5.6,26.8 C6.8,26.6 6.8,25 5.6,23.4Z" fill="#7ab0f0" stroke="#2a5a9a" stroke-width=".4"/></g></svg>
<svg style="position:absolute;left:0;top:0" width="1024" height="692"><path d="M59.5,172 V178 M66.5,175 V178 M73.5,172 V178 M80.5,175 V178 M87.5,164 V178 M94.5,175 V178 M101.5,172 V178 M108.5,175 V178 M115.5,172 V178 M122.5,175 V178 M129.5,172 V178 M136.5,175 V178 M143.5,172 V178 M150.5,175 V178 M157.5,164 V178 M164.5,175 V178 M171.5,172 V178 M178.5,175 V178 M185.5,172 V178 M192.5,175 V178 M199.5,172 V178 M206.5,175 V178 M213.5,172 V178 M220.5,175 V178 M227.5,164 V178 M234.5,175 V178 M241.5,172 V178 M248.5,175 V178 M255.5,172 V178 M262.5,175 V178 M269.5,172 V178 M276.5,175 V178 M283.5,172 V178 M290.5,175 V178 M297.5,164 V178 M304.5,175 V178 M311.5,172 V178 M318.5,175 V178 M325.5,172 V178 M332.5,175 V178 M339.5,172 V178 M346.5,175 V178 M353.5,172 V178 M360.5,175 V178 M367.5,164 V178 M374.5,175 V178 M381.5,172 V178 M388.5,175 V178 M395.5,172 V178 M402.5,175 V178 M409.5,172 V178 M416.5,175 V178 M423.5,172 V178 M430.5,175 V178 M437.5,164 V178 M444.5,175 V178 M451.5,172 V178 M458.5,175 V178 M465.5,172 V178 M472.5,175 V178 M479.5,172 V178 M486.5,175 V178 M493.5,172 V178 M500.5,175 V178 M507.5,164 V178 M514.5,175 V178 M521.5,172 V178 M528.5,175 V178 M535.5,172 V178 M542.5,175 V178 M549.5,172 V178 M556.5,175 V178 M563.5,172 V178 M570.5,175 V178 M577.5,164 V178 M584.5,175 V178 M591.5,172 V178 M598.5,175 V178 M605.5,172 V178 M612.5,175 V178 M619.5,172 V178 M626.5,175 V178 M633.5,172 V178 M640.5,175 V178 M647.5,164 V178 M654.5,175 V178 M661.5,172 V178 M668.5,175 V178 M675.5,172 V178 M682.5,175 V178 M689.5,172 V178 M696.5,175 V178 M703.5,172 V178 M710.5,175 V178 M717.5,164 V178 M724.5,175 V178 M731.5,172 V178 M738.5,175 V178 M745.5,172 V178 M752.5,175 V178 M759.5,172 V178 M766.5,175 V178 M773.5,172 V178 M780.5,175 V178 M787.5,164 V178 M794.5,175 V178 M801.5,172 V178 M808.5,175 V178 M815.5,172 V178 M822.5,175 V178 M829.5,172 V178 M836.5,175 V178 M843.5,172 V178 M850.5,175 V178 M857.5,164 V178 M864.5,175 V178 M871.5,172 V178 M878.5,175 V178 M885.5,172 V178 M892.5,175 V178 M899.5,172 V178 M906.5,175 V178 M913.5,172 V178 M920.5,175 V178 M927.5,164 V178 M934.5,175 V178 M941.5,172 V178 M948.5,175 V178 M51,180.5 H54 M48,187.5 H54 M51,194.5 H54 M40,201.5 H54 M51,208.5 H54 M48,215.5 H54 M51,222.5 H54 M48,229.5 H54 M51,236.5 H54 M48,243.5 H54 M51,250.5 H54 M48,257.5 H54 M51,264.5 H54 M40,271.5 H54 M51,278.5 H54 M48,285.5 H54 M51,292.5 H54 M48,299.5 H54 M51,306.5 H54 M48,313.5 H54 M51,320.5 H54 M48,327.5 H54 M51,334.5 H54 M40,341.5 H54 M51,348.5 H54 M48,355.5 H54 M51,362.5 H54 M48,369.5 H54 M51,376.5 H54 M48,383.5 H54 M51,390.5 H54 M48,397.5 H54 M51,404.5 H54 M40,411.5 H54 M51,418.5 H54 M48,425.5 H54 M51,432.5 H54 M48,439.5 H54 M51,446.5 H54 M48,453.5 H54 M51,460.5 H54 M48,467.5 H54 M51,474.5 H54 M40,481.5 H54 M51,488.5 H54 M48,495.5 H54 M51,502.5 H54 M48,509.5 H54 M51,516.5 H54 M48,523.5 H54 M51,530.5 H54 M48,537.5 H54 M51,544.5 H54 M40,551.5 H54 M51,558.5 H54 M48,565.5 H54 M51,572.5 H54 M48,579.5 H54 M51,586.5 H54 M48,593.5 H54 M51,600.5 H54 M48,607.5 H54 M51,614.5 H54 M40,621.5 H54 M51,628.5 H54 M48,635.5 H54 M51,642.5 H54 M48,649.5 H54 M51,656.5 H54 M48,663.5 H54 M51,670.5 H54 M48,677.5 H54 M51,684.5 H54 " stroke="#e0e0e0" stroke-width="1" fill="none"/><path d="M56.5,177 V172.5 H59.5 V175" stroke="#e0e0e0" stroke-width="1" fill="none"/><path d="M50,180.5 H54" stroke="#e0e0e0" stroke-width="1" fill="none"/><path d="M90.5,168.5 h5" stroke="#d4d4d4" stroke-width="1"/><text x="96.5" y="172.6" font-size="7.6" fill="#d4d4d4" font-style="italic" letter-spacing="0.9">300</text><path d="M160.5,168.5 h5" stroke="#d4d4d4" stroke-width="1"/><text x="166.5" y="172.6" font-size="7.6" fill="#d4d4d4" font-style="italic" letter-spacing="0.9">200</text><path d="M230.5,168.5 h5" stroke="#d4d4d4" stroke-width="1"/><text x="236.5" y="172.6" font-size="7.6" fill="#d4d4d4" font-style="italic" letter-spacing="0.9">100</text><text x="300.5" y="172.6" font-size="7.6" fill="#d4d4d4" font-style="italic" letter-spacing="0.9">0</text><text x="370.5" y="172.6" font-size="7.6" fill="#d4d4d4" font-style="italic" letter-spacing="0.9">100</text><text x="440.5" y="172.6" font-size="7.6" fill="#d4d4d4" font-style="italic" letter-spacing="0.9">200</text><text x="510.5" y="172.6" font-size="7.6" fill="#d4d4d4" font-style="italic" letter-spacing="0.9">300</text><text x="580.5" y="172.6" font-size="7.6" fill="#d4d4d4" font-style="italic" letter-spacing="0.9">400</text><text x="650.5" y="172.6" font-size="7.6" fill="#d4d4d4" font-style="italic" letter-spacing="0.9">500</text><text x="720.5" y="172.6" font-size="7.6" fill="#d4d4d4" font-style="italic" letter-spacing="0.9">600</text><text x="790.5" y="172.6" font-size="7.6" fill="#d4d4d4" font-style="italic" letter-spacing="0.9">700</text><text x="860.5" y="172.6" font-size="7.6" fill="#d4d4d4" font-style="italic" letter-spacing="0.9">800</text><text x="930.5" y="172.6" font-size="7.6" fill="#d4d4d4" font-style="italic" letter-spacing="0.9">900</text><text x="42" y="211.8" font-size="7.6" fill="#d4d4d4" font-style="italic">9</text><text x="42" y="220.1" font-size="7.6" fill="#d4d4d4" font-style="italic">0</text><text x="42" y="228.4" font-size="7.6" fill="#d4d4d4" font-style="italic">0</text><text x="42" y="281.8" font-size="7.6" fill="#d4d4d4" font-style="italic">8</text><text x="42" y="290.1" font-size="7.6" fill="#d4d4d4" font-style="italic">0</text><text x="42" y="298.4" font-size="7.6" fill="#d4d4d4" font-style="italic">0</text><text x="42" y="351.8" font-size="7.6" fill="#d4d4d4" font-style="italic">7</text><text x="42" y="360.1" font-size="7.6" fill="#d4d4d4" font-style="italic">0</text><text x="42" y="368.4" font-size="7.6" fill="#d4d4d4" font-style="italic">0</text><text x="42" y="421.8" font-size="7.6" fill="#d4d4d4" font-style="italic">6</text><text x="42" y="430.1" font-size="7.6" fill="#d4d4d4" font-style="italic">0</text><text x="42" y="438.4" font-size="7.6" fill="#d4d4d4" font-style="italic">0</text><text x="42" y="491.8" font-size="7.6" fill="#d4d4d4" font-style="italic">5</text><text x="42" y="500.1" font-size="7.6" fill="#d4d4d4" font-style="italic">0</text><text x="42" y="508.4" font-size="7.6" fill="#d4d4d4" font-style="italic">0</text><text x="42" y="561.8" font-size="7.6" fill="#d4d4d4" font-style="italic">4</text><text x="42" y="570.1" font-size="7.6" fill="#d4d4d4" font-style="italic">0</text><text x="42" y="578.4" font-size="7.6" fill="#d4d4d4" font-style="italic">0</text><text x="42" y="631.8" font-size="7.6" fill="#d4d4d4" font-style="italic">3</text><text x="42" y="640.1" font-size="7.6" fill="#d4d4d4" font-style="italic">0</text><text x="42" y="648.4" font-size="7.6" fill="#d4d4d4" font-style="italic">0</text><text x="42" y="701.8" font-size="7.6" fill="#d4d4d4" font-style="italic">2</text><text x="42" y="710.1" font-size="7.6" fill="#d4d4d4" font-style="italic">0</text><text x="42" y="718.4" font-size="7.6" fill="#d4d4d4" font-style="italic">0</text><path d="M48,464 L51.5,467.5 L48,471Z" fill="#c8c8c8"/></svg>
<svg style="position:absolute;left:54px;top:178px;background:#fff" width="899" height="514" viewBox="0 0 899 514"><rect x="243" y="0" width="1" height="514" fill="#6a6a6a"/><rect x="764" y="0" width="3" height="514" fill="#5e5e5e"/><circle cx="501.2" cy="265.2" r="202" fill="none" stroke="#c2b6b5" stroke-width="5.2"/><path d="M220.3,229.8C220.2,227.2 219.5,219.5 219.5,214.0C219.5,208.5 219.7,203.2 220.5,197.0C221.3,190.8 222.1,183.4 224.3,176.7C226.6,170.0 230.1,162.3 234.0,157.0C237.9,151.7 242.5,147.8 248.0,145.0C253.5,142.2 259.7,140.0 267.0,140.3C274.3,140.6 284.5,144.1 292.0,147.0C299.5,149.9 306.8,154.6 312.2,158.0C317.8,161.4 322.9,166.0 325.0,167.6C328.5,163.7 339.2,150.8 346.0,143.9C352.8,137.0 358.8,131.4 366.0,126.0C373.2,120.6 381.8,115.4 389.5,111.4C397.2,107.4 404.2,104.6 412.0,102.0C419.8,99.4 426.1,97.6 436.4,95.8C446.7,93.9 461.5,92.7 474.0,91.0C486.5,89.3 501.2,87.4 511.5,85.7C521.8,83.9 528.2,82.7 536.0,80.5C543.8,78.3 554.7,73.9 558.4,72.6C558.3,70.2 557.0,63.0 557.8,58.2C558.5,53.5 559.3,48.4 563.0,44.0C566.7,39.6 574.5,34.4 580.0,31.7C585.5,29.0 590.5,28.8 596.0,28.0C601.5,27.2 607.2,26.7 613.0,27.0C618.8,27.3 625.2,28.2 631.0,29.6C636.8,31.0 642.2,32.6 648.0,35.2C653.8,37.8 661.1,41.7 665.5,45.0C669.9,48.3 672.0,51.3 674.5,55.0C677.0,58.7 679.5,65.0 680.5,67.0C675.2,68.0 656.8,71.5 649.0,73.2C641.2,75.0 638.7,75.8 634.0,77.5C629.3,79.2 624.8,81.3 621.0,83.3C617.2,85.3 613.6,87.1 611.0,89.5C608.4,91.9 606.2,96.3 605.2,97.6C610.5,99.9 628.5,107.5 636.5,111.4C644.5,115.3 647.8,117.4 653.0,121.0C658.2,124.6 663.4,128.9 667.8,133.2C672.1,137.6 675.9,142.3 679.0,147.0C682.1,151.7 684.5,156.7 686.5,161.4C688.5,166.1 690.0,170.3 691.0,175.0C692.0,179.7 692.5,184.7 692.8,189.5C693.0,194.3 692.8,201.3 692.8,203.6C694.1,206.0 698.5,212.6 701.0,217.0C703.5,221.4 705.9,225.8 707.6,230.0C709.4,234.2 710.3,237.7 711.5,242.0C712.7,246.3 714.0,251.7 714.6,256.0C715.2,260.3 715.3,263.3 715.0,268.0C714.7,272.7 714.0,278.2 712.7,284.0C711.4,289.8 709.7,296.7 707.0,303.0C704.3,309.3 701.0,315.1 696.5,321.7C692.0,328.3 685.5,335.7 680.0,342.8C674.5,349.8 668.2,357.4 663.5,364.0C658.8,370.6 654.9,377.1 652.0,382.5C649.1,387.9 647.4,392.8 646.0,396.5C644.6,400.2 644.2,403.4 643.8,404.8C640.8,406.6 630.9,412.6 626.0,415.4C621.1,418.2 621.7,418.8 614.6,421.7C607.5,424.6 594.3,430.0 583.4,432.6C572.5,435.2 562.0,437.0 549.0,437.3C536.0,437.6 517.8,435.4 505.2,434.2C492.8,433.1 488.1,431.4 474.0,430.4C459.9,429.4 437.2,427.9 420.8,428.0C404.3,428.1 383.0,430.5 375.4,431.0C370.5,427.1 353.8,415.7 345.8,407.6C337.7,399.5 331.6,391.5 327.0,382.6C322.4,373.8 319.8,362.3 318.2,354.5C316.7,346.7 317.2,344.1 317.6,335.8C318.0,327.4 319.6,315.5 320.8,304.5C321.9,293.5 324.2,280.4 324.5,270.0C324.8,259.6 323.6,249.5 322.3,242.0C321.1,234.5 318.9,229.9 317.0,225.0C315.1,220.1 311.8,214.7 310.7,212.6C308.9,212.0 303.9,210.1 300.0,208.8C296.1,207.5 292.2,206.0 287.2,204.8C282.2,203.6 275.7,201.8 270.0,201.7C264.3,201.6 258.4,202.2 252.9,204.0C247.4,205.8 242.7,208.3 237.2,212.6C231.8,216.9 223.1,226.9 220.3,229.8Z" fill="#cccccc" stroke="#000" stroke-width="7" stroke-linejoin="miter" stroke-miterlimit="6"/><line x1="320.8" y1="348.9" x2="694.3" y2="217.0" stroke="#000" stroke-width="0.8"/><line x1="498.4" y1="351.4" x2="710.0" y2="253.0" stroke="#000" stroke-width="0.8"/><line x1="648.0" y1="313.2" x2="642.8" y2="401.4" stroke="#000" stroke-width="0.8"/><line x1="369.8" y1="361.7" x2="436.4" y2="424.2" stroke="#000" stroke-width="0.8"/><line x1="431.7" y1="342.9" x2="397.3" y2="387.3" stroke="#000" stroke-width="0.8"/><line x1="445.8" y1="393.9" x2="416.0" y2="404.5" stroke="#000" stroke-width="0.8"/></svg>
<div style="position:absolute;left:957px;top:186px;width:15px;height:506px;background:#2f2f2f;border-radius:3px;box-shadow:0 0 0 1px #2a2a2a"></div>
<div style="position:absolute;left:957px;top:186px;width:15px;height:14px;background:#5a5a5a;border-radius:3px 3px 0 0"></div>
<div style="position:absolute;left:957px;top:678px;width:15px;height:14px;background:#5a5a5a;border-radius:0 0 3px 3px"></div>
<svg style="position:absolute;left:957px;top:186px" width="15" height="14"><path d="M4,9 L7.5,5.5 L11,9" fill="none" stroke="#aaa" stroke-width="1.3"/></svg>
<svg style="position:absolute;left:957px;top:678px" width="15" height="14"><path d="M4,5.5 L7.5,9 L11,5.5" fill="none" stroke="#aaa" stroke-width="1.3"/></svg>
<div style="position:absolute;left:957.5px;top:381.5px;width:14.2px;height:103.5px;background:linear-gradient(90deg,#33adff,#0a9cff);box-shadow:inset 1px 1px 0 #5cc2ff"></div>
<div style="position:absolute;left:962px;top:429px;width:5px;height:1px;background:#0c4474"></div>
<div style="position:absolute;left:962px;top:432px;width:5px;height:1px;background:#0c4474"></div>
<div style="position:absolute;left:962px;top:435px;width:5px;height:1px;background:#0c4474"></div>
<div style="position:absolute;left:55px;top:696px;width:898px;height:15px;background:#2f2f2f;border-radius:3px;box-shadow:0 0 0 1px #2a2a2a"></div>
<div style="position:absolute;left:55px;top:696px;width:13px;height:15px;background:#5a5a5a;border-radius:3px 0 0 3px"></div>
<div style="position:absolute;left:939px;top:696px;width:14px;height:15px;background:#5a5a5a;border-radius:0 3px 3px 0"></div>
<svg style="position:absolute;left:55px;top:696px" width="13" height="15"><path d="M8.5,4 L5,7.5 L8.5,11" fill="none" stroke="#aaa" stroke-width="1.3"/></svg>
<svg style="position:absolute;left:939px;top:696px" width="14" height="15"><path d="M5.5,4 L9,7.5 L5.5,11" fill="none" stroke="#aaa" stroke-width="1.3"/></svg>
<div style="position:absolute;left:244.5px;top:696.5px;width:460.5px;height:14px;background:linear-gradient(#33adff,#0a9cff);box-shadow:inset 1px 1px 0 #5cc2ff"></div>
<div style="position:absolute;left:471px;top:701px;width:1px;height:5px;background:#0c4474"></div>
<div style="position:absolute;left:474px;top:701px;width:1px;height:5px;background:#0c4474"></div>
<div style="position:absolute;left:477px;top:701px;width:1px;height:5px;background:#0c4474"></div>
<svg style="position:absolute;left:956px;top:165px;overflow:visible" width="18" height="18" viewBox="0 0 24 24"><g transform="scale(1.33333)"><path d="M11,11 L15.6,15.4" stroke="#7a4a00" stroke-width="3.6" stroke-linecap="round"/>
<path d="M11.6,11.6 L15.6,15.4" stroke="#f5a614" stroke-width="2.4" stroke-linecap="round"/>
<circle cx="6.6" cy="6.6" r="5.2" fill="url(#gLens)" stroke="#555" stroke-width="1"/></g></svg>
<svg style="position:absolute;left:957px;top:696px;overflow:visible" width="16" height="16" viewBox="0 0 24 24"><g transform="scale(1.50000)"><defs><linearGradient id="gCms" x1="0" y1="0" x2="1" y2="0"><stop offset="0" stop-color="#2ad02a"/><stop offset=".5" stop-color="#7a7ab0"/><stop offset="1" stop-color="#e83a3a"/></linearGradient>
<linearGradient id="gCms2" x1="0" y1="0" x2="0" y2="1"><stop offset="0" stop-color="#2ad02a" stop-opacity=".9"/><stop offset=".5" stop-color="#2ad02a" stop-opacity="0"/><stop offset="1" stop-color="#3a3ae8" stop-opacity=".9"/></linearGradient></defs>
<path d="M2,.8 L14.4,9.6 L3.6,15Z" fill="url(#gCms)"/><path d="M2,.8 L14.4,9.6 L3.6,15Z" fill="url(#gCms2)"/></g></svg>
<div style="position:absolute;left:977.5px;top:436px;width:4.5px;height:1px;background:#3c3c3c"></div>
<div style="position:absolute;left:977.5px;top:439px;width:4.5px;height:1px;background:#3c3c3c"></div>
<div style="position:absolute;left:977.5px;top:442px;width:4.5px;height:1px;background:#3c3c3c"></div>
<div style="position:absolute;left:983px;top:162px;width:36px;height:554px;background:#505050;border:1px solid #3e3e3e;box-sizing:border-box;box-shadow:1px 0 0 #5a5a5a"></div>
<div style="position:absolute;left:1022px;top:36px;width:2px;height:704px;background:#242424"></div>
<div style="position:absolute;left:0px;top:31px;width:2px;height:30px;background:#0c0c0c"></div>
<div style="position:absolute;left:0px;top:60px;width:1px;height:680px;background:#242424"></div>
<div style="position:absolute;left:1px;top:60px;width:1px;height:680px;background:#444"></div>
<div style="position:absolute;left:998px;top:384.5px;width:0;height:0;transform:rotate(-90deg);transform-origin:0 0"><span class="t" style="left:0.0px;top:-9.2px;font-size:14.5px;line-height:18.5px;color:#bcbcbc;letter-spacing:1.11px;">Fill&nbsp;and&nbsp;Stroke&nbsp;(Shift+Ctrl+F)</span></div>
<svg style="position:absolute;left:993px;top:384.8px;overflow:visible" width="16.4" height="16.4" viewBox="0 0 24 24"><path d="M2,2 H22 V4 L4,22 H2Z" fill="#000"/>
<path d="M4.5,4.5 H21.5 L4.5,21.5Z" fill="#fff"/>
<path d="M2,2 H22 L2,22Z" fill="url(#gFadeR)" opacity=".15"/>
<path d="M22.5,2.5 L23,9 L19,10.5 L17.5,8Z" fill="#f5b516" stroke="#c88a00" stroke-width=".4"/>
<path d="M18.2,8.3 L19.8,10.8 L13.5,15.5 L11.8,13.2Z" fill="#aaa" stroke="#444" stroke-width=".5"/>
<path d="M12.2,13 L14,15.6 C11,20 7,21.5 3.5,22 C5,19 8,14.5 12.2,13Z" fill="#333" stroke="#000" stroke-width=".5"/></svg>
<div style="position:absolute;left:6px;top:717px;width:26px;height:22px;background:#000000"></div>
<div style="position:absolute;left:32px;top:717px;width:26px;height:22px;background:#1a1a1a"></div>
<div style="position:absolute;left:58px;top:717px;width:26px;height:22px;background:#333333"></div>
<div style="position:absolute;left:84px;top:717px;width:26px;height:22px;background:#4d4d4d"></div>
<div style="position:absolute;left:110px;top:717px;width:26px;height:22px;background:#666666"></div>
<div style="position:absolute;left:136px;top:717px;width:26px;height:22px;background:#808080"></div>
<div style="position:absolute;left:162px;top:717px;width:26px;height:22px;background:#999999"></div>
<div style="position:absolute;left:188px;top:717px;width:26px;height:22px;background:#b3b3b3"></div>
<div style="position:absolute;left:214px;top:717px;width:26px;height:22px;background:#cccccc"></div>
<div style="position:absolute;left:240px;top:717px;width:26px;height:22px;background:#e6e6e6"></div>
<div style="position:absolute;left:266px;top:717px;width:26px;height:22px;background:#ececec"></div>
<div style="position:absolute;left:292px;top:717px;width:26px;height:22px;background:#f2f2f2"></div>
<div style="position:absolute;left:318px;top:717px;width:26px;height:22px;background:#f9f9f9"></div>
<div style="position:absolute;left:344px;top:717px;width:26px;height:22px;background:#ffffff"></div>
<div style="position:absolute;left:370px;top:717px;width:26px;height:22px;background:#800000"></div>
<div style="position:absolute;left:396px;top:717px;width:26px;height:22px;background:#ff0000"></div>
<div style="position:absolute;left:422px;top:717px;width:26px;height:22px;background:#808000"></div>
<div style="position:absolute;left:448px;top:717px;width:26px;height:22px;background:#ffff00"></div>
<div style="position:absolute;left:474px;top:717px;width:26px;height:22px;background:#008000"></div>
<div style="position:absolute;left:500px;top:717px;width:26px;height:22px;background:#00ff00"></div>
<div style="position:absolute;left:526px;top:717px;width:26px;height:22px;background:#008080"></div>
<div style="position:absolute;left:552px;top:717px;width:26px;height:22px;background:#00ffff"></div>
<div style="position:absolute;left:578px;top:717px;width:26px;height:22px;background:#000080"></div>
<div style="position:absolute;left:604px;top:717px;width:26px;height:22px;background:#0000ff"></div>
<div style="position:absolute;left:630px;top:717px;width:26px;height:22px;background:#800080"></div>
<div style="position:absolute;left:656px;top:717px;width:26px;height:22px;background:#ff00ff"></div>
<div style="position:absolute;left:682px;top:717px;width:26px;height:22px;background:#2b0000"></div>
<div style="position:absolute;left:708px;top:717px;width:26px;height:22px;background:#550000"></div>
<div style="position:absolute;left:734px;top:717px;width:26px;height:22px;background:#800000"></div>
<div style="position:absolute;left:760px;top:717px;width:26px;height:22px;background:#aa0000"></div>
<div style="position:absolute;left:786px;top:717px;width:26px;height:22px;background:#d40000"></div>
<div style="position:absolute;left:812px;top:717px;width:26px;height:22px;background:#ff0000"></div>
<div style="position:absolute;left:838px;top:717px;width:26px;height:22px;background:#ff2a2a"></div>
<div style="position:absolute;left:864px;top:717px;width:26px;height:22px;background:#ff5555"></div>
<div style="position:absolute;left:890px;top:717px;width:26px;height:22px;background:#ff8080"></div>
<div style="position:absolute;left:916px;top:717px;width:26px;height:22px;background:#ffaaaa"></div>
<div style="position:absolute;left:942px;top:717px;width:26px;height:22px;background:#ffd5d5"></div>
<div style="position:absolute;left:968px;top:717px;width:26px;height:22px;background:#280b0b"></div>
<div style="position:absolute;left:994px;top:717px;width:3px;height:22px;background:#501616"></div>
<svg style="position:absolute;left:999px;top:717px" width="20" height="22"><path d="M13.5,3.5 L6,11 L13.5,18.5" fill="none" stroke="#bdbdbd" stroke-width="2"/></svg>
<div style="position:absolute;left:0px;top:739px;width:1024px;height:1px;background:#7c8888"></div>
<div style="position:absolute;left:0px;top:740px;width:1024px;height:28px;background:linear-gradient(#1c1c1c 0,#1c1c1c 1px,#2c2c2c 2px,#262626 5px,#000 12px,#000 14px,#2e2e2e 22px,#303030 23px,#202020 23.5px,#202020 24.5px,#2a2a2a 25px,#2a2a2a 28px)"></div>
<div style="position:absolute;left:2px;top:742px;width:26px;height:25px;background:#4c4c4c;border-radius:3px"></div>
<svg style="position:absolute;left:4px;top:743px;overflow:visible" width="22" height="22" viewBox="0 0 24 24"><g transform="scale(1.09091)"><rect x="1.4" y="4" width="19.2" height="13.6" rx="1" fill="#fff" stroke="#2a5aa8" stroke-width="1.2"/>
<path d="M2.6,7.4 H19.4 C19.4,12 17,16.4 15,16.6 H7 C5,16.4 2.6,12 2.6,7.4Z" fill="#5a8ad0"/>
<path d="M2.6,7.4 H19.4 C19.4,9 19,10.6 18.6,12 C12,13 6,11 2.8,9.4Z" fill="#86a8dc" opacity=".8"/></g></svg>
<div style="position:absolute;left:40px;top:751px;width:4px;height:1px;background:#5a5a5a"></div>
<div style="position:absolute;left:40px;top:754px;width:4px;height:1px;background:#5a5a5a"></div>
<div style="position:absolute;left:40px;top:757px;width:4px;height:1px;background:#5a5a5a"></div>
<div style="position:absolute;left:49px;top:742px;width:222px;height:24px;background:linear-gradient(#424242,#464646);border-radius:3px;box-shadow:inset 0 0 0 1px #383838"></div><svg style="position:absolute;left:55px;top:746px;overflow:visible" width="16" height="16" viewBox="0 0 24 24"><g transform="scale(1.50000)"><path d="M8,.8 L15.4,7.6 L13,10.2 L10.4,9.2 L8,10.8 L5.4,9.4 L3,10.2 L.6,7.6Z" fill="#050505"/>
<path d="M7.4,1.8 L9.6,3.8 L8,5.6 L6.4,5 L4.4,6.6 L2.6,6.4Z" fill="#fff" opacity=".9"/>
<path d="M4.4,11.6 h2.6 M9,11.4 h3.4 M6,13.4 h5" stroke="#0a0a0a" stroke-width="1.3" stroke-linecap="round"/></g></svg><span class="t" style="left:79.0px;top:744.8px;font-size:14.5px;line-height:18.5px;color:#c4c4c4;letter-spacing:0.85px;">New&nbsp;document&nbsp;1&nbsp;-&nbsp;Inks...</span>
<div style="position:absolute;left:275px;top:742px;width:222px;height:24px;background:linear-gradient(#4e4e4e,#464646);border-radius:3px;box-shadow:inset 0 0 0 1px #585858"></div><svg style="position:absolute;left:281px;top:746px;overflow:visible" width="16" height="16" viewBox="0 0 24 24"><g transform="scale(1.50000)"><path d="M1.6,15 V7 C1.6,-.4 13,-.4 13,7 V11.4 C13,13 14,14.2 15,15Z" fill="#8e4aa8" stroke="#5e2a78" stroke-width=".7"/>
<circle cx="5.8" cy="6.8" r="2.2" fill="#fff"/><circle cx="10" cy="6.8" r="2.2" fill="#fff"/>
<circle cx="6.2" cy="7" r=".9" fill="#222"/><circle cx="9.6" cy="7" r=".9" fill="#222"/>
<path d="M5,10.4 L11.6,9.2 L9,12.8Z" fill="#f08a1a" stroke="#b85a00" stroke-width=".4"/></g></svg><span class="t" style="left:305.0px;top:744.8px;font-size:14.5px;line-height:18.5px;color:#c4c4c4;letter-spacing:0.70px;">Buddy&nbsp;List</span>
<div style="position:absolute;left:501.5px;top:742px;width:222px;height:24px;background:linear-gradient(#4e4e4e,#464646);border-radius:3px;box-shadow:inset 0 0 0 1px #585858"></div><svg style="position:absolute;left:507.5px;top:746px;overflow:visible" width="16" height="16" viewBox="0 0 24 24"><g transform="scale(1.50000)"><path d="M2,1 H10.4 L14,4.6 V15 H2Z" fill="#fafafa" stroke="#b8b8b8" stroke-width=".7"/>
<path d="M4,4.4 h5 M4,6.4 h8 M4,8.4 h3 M4,13 h3" stroke="#9a9a9a" stroke-width=".8"/>
<rect x="7.6" y="8.4" width="4.8" height="4.8" fill="#3a78c8" stroke="#9ac0f0" stroke-width=".8"/></g></svg><span class="t" style="left:531.5px;top:744.8px;font-size:14.5px;line-height:18.5px;color:#c4c4c4;letter-spacing:0.95px;">Untitled&nbsp;1&nbsp;-&nbsp;OpenOffice...</span>
<div style="position:absolute;left:929px;top:742px;width:32px;height:25px;background:#3daeff;border:1px solid #f4f4f4;border-top:1px solid #1a6ab0;box-sizing:border-box"></div>
<svg style="position:absolute;left:937px;top:747px;overflow:visible" width="16" height="16" viewBox="0 0 24 24"><g transform="scale(1.50000)"><path d="M8,.8 L15.4,7.6 L13,10.2 L10.4,9.2 L8,10.8 L5.4,9.4 L3,10.2 L.6,7.6Z" fill="#050505"/>
<path d="M7.4,1.8 L9.6,3.8 L8,5.6 L6.4,5 L4.4,6.6 L2.6,6.4Z" fill="#fff" opacity=".9"/>
<path d="M4.4,11.6 h2.6 M9,11.4 h3.4 M6,13.4 h5" stroke="#0a0a0a" stroke-width="1.3" stroke-linecap="round"/></g></svg>
<div style="position:absolute;left:961px;top:742px;width:34px;height:25px;background:#3a3a3a;border-radius:0 3px 3px 0"></div>
<svg style="position:absolute;left:998px;top:742px;overflow:visible" width="24" height="24" viewBox="0 0 24 24"><g transform="scale(1.00000)"><path d="M4.4,6.4 H19.6 L18.2,22 C16,23.4 8,23.4 5.8,22Z" fill="#c4c4c0" stroke="#8a8a86" stroke-width=".6"/>
<path d="M6,8 C10,9 14,9 18,8 L17,21 C14,22 10,22 7,21Z" fill="#dcdcd8" opacity=".8"/>
<ellipse cx="12" cy="5.6" rx="8.6" ry="3.4" fill="#e8e8e4" stroke="#9a9a96" stroke-width=".7"/>
<path d="M5,4 C7,1 9,3 11,1.6 C13,0 15,3 17,2 C19,2 19.6,4 19.4,5 C16,7.6 8,7.6 4.6,5.4Z" fill="#f0f0ec" stroke="#aaa" stroke-width=".4"/>
<path d="M9.6,13 L12,10.6 L14.4,13 M15,15 L14,18 H10 M9,15.6 L10,18" fill="none" stroke="#8a8a86" stroke-width="1.1"/></g></svg>
<div style="position:absolute;left:42px;top:476px;width:186px;height:28px;background:#fbf9c6;border:1px solid #b5ae46;box-sizing:border-box"></div>
<span class="t" style="left:47.0px;top:480.2px;font-size:14.5px;line-height:18.5px;color:#111;letter-spacing:0.76px;">Draw&nbsp;freehand&nbsp;lines&nbsp;(F6)</span>
<svg style="position:absolute;left:30px;top:458px" width="24" height="32"><defs><linearGradient id="gCur" x1="0" y1="0" x2="1" y2="1"><stop offset="0" stop-color="#fafafa"/><stop offset="1" stop-color="#c4c6c2"/></linearGradient></defs><path d="M6,6.6 L17.6,18.2 L13.2,26.4 L6,23.2Z" fill="url(#gCur)" stroke="#101010" stroke-width="1.3" stroke-linejoin="round"/></svg>
</div>
</body></html>
